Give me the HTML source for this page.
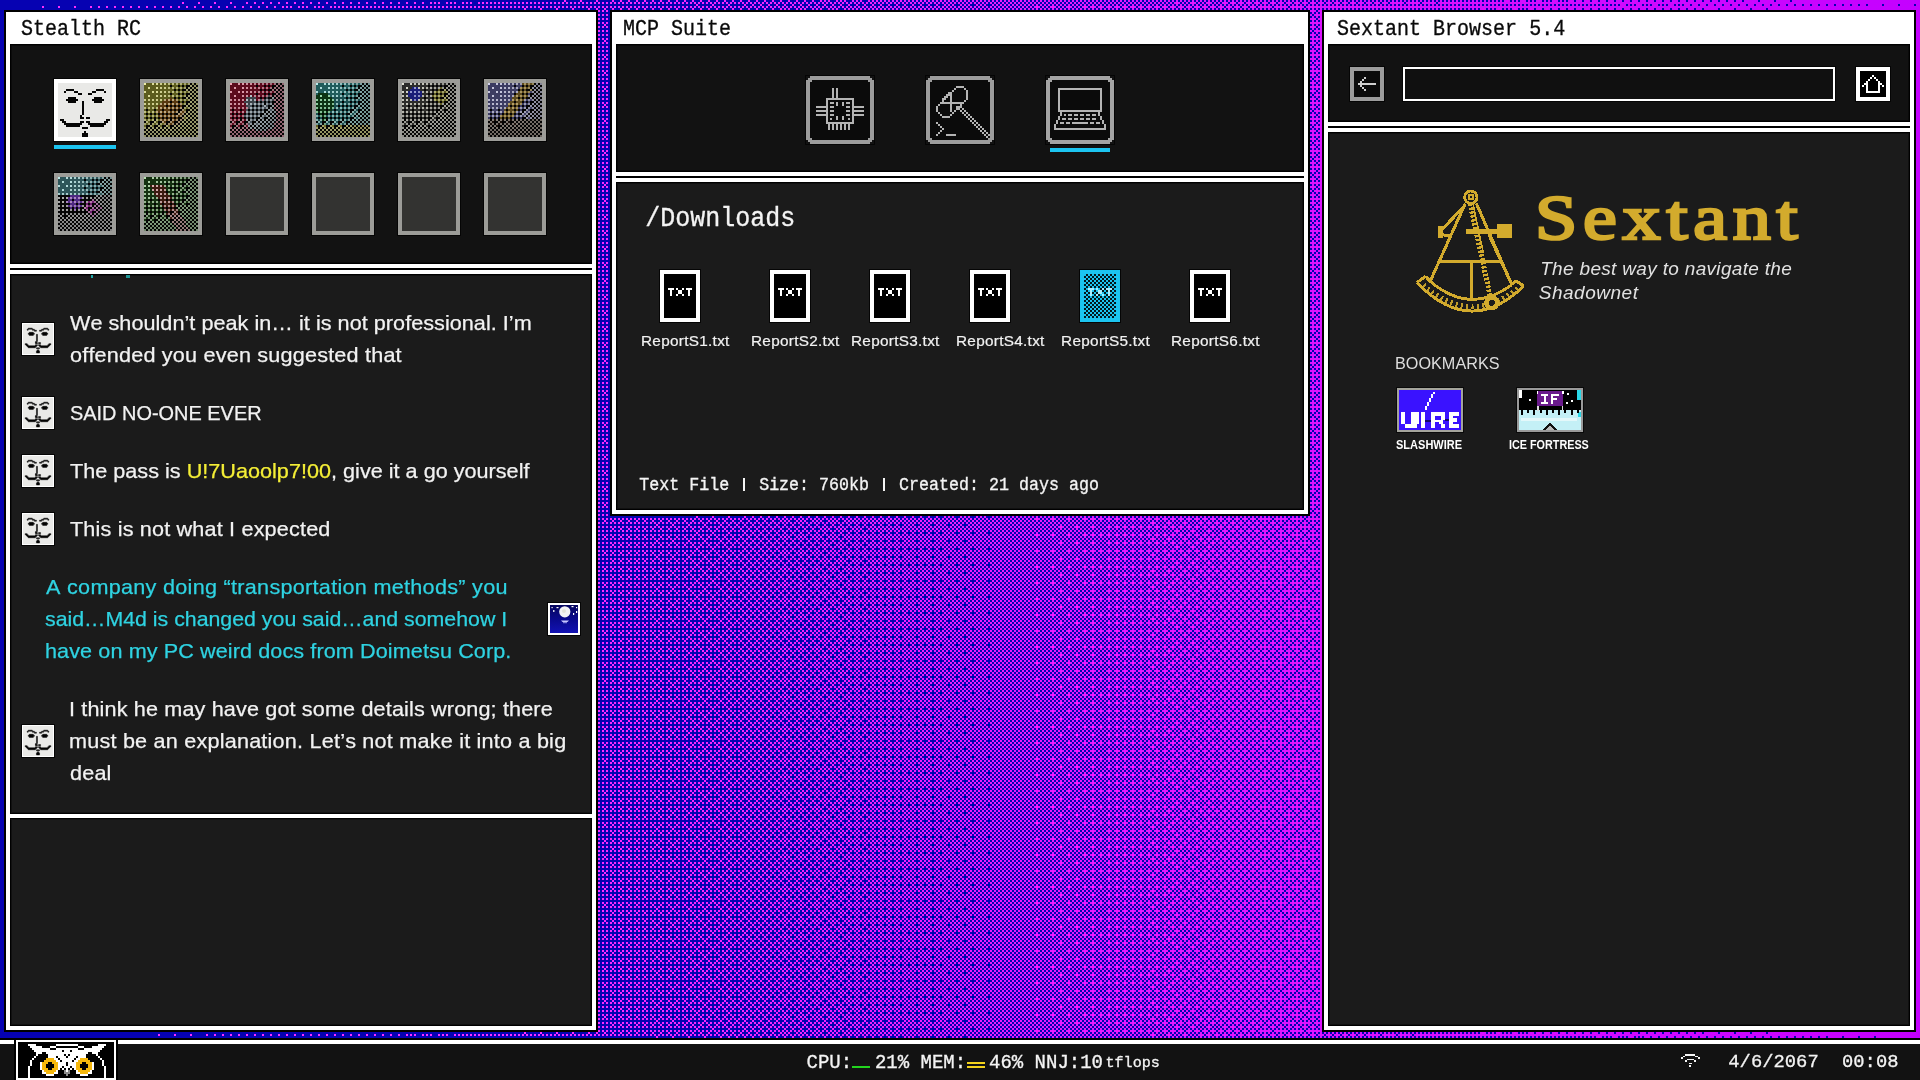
<!DOCTYPE html><html><head><meta charset="utf-8"><title>desktop</title><style>
*{box-sizing:border-box;margin:0;padding:0}
html,body{width:1920px;height:1080px;overflow:hidden;background:#0602b2}
body{position:relative;font-family:"Liberation Sans",sans-serif;color:#f2f2f2}
.bg{position:absolute;left:0;top:0}
.abs{position:absolute}
.win{position:absolute;background:#000}
.win>.wh{position:absolute;left:2px;top:2px;right:2px;bottom:2px;background:#fff}
.pn{position:absolute;background:#1b1b1b;box-shadow:inset 0 0 0 1px #000,inset 0 0 0 2px rgba(0,0,0,.4);overflow:hidden}
.pn.d{background:#121212}
.bl{position:absolute;background:#000;height:2px}
.mono{position:absolute;font-family:"Liberation Mono",monospace;white-space:pre;transform-origin:0 0;font-kerning:none;-webkit-text-stroke:.3px currentColor}
.t{position:absolute;white-space:pre;font-kerning:none}
svg{display:block}
.px{shape-rendering:crispEdges}
</style></head><body><svg class="bg" width="1920" height="1080" viewBox="0 0 1920 1080" shape-rendering="crispEdges"><defs><pattern id="b0" width="16" height="16" patternUnits="userSpaceOnUse"><rect x="10" y="6" width="2" height="2" fill="#ff2cff"/></pattern><pattern id="b1" width="16" height="16" patternUnits="userSpaceOnUse"><rect x="2" y="14" width="2" height="2" fill="#ff2cff"/></pattern><pattern id="b2" width="16" height="16" patternUnits="userSpaceOnUse"><rect x="2" y="6" width="2" height="2" fill="#ff2cff"/></pattern><pattern id="b3" width="16" height="16" patternUnits="userSpaceOnUse"><rect x="10" y="14" width="2" height="2" fill="#ff2cff"/></pattern><pattern id="b4" width="16" height="16" patternUnits="userSpaceOnUse"><rect x="14" y="10" width="2" height="2" fill="#ff2cff"/></pattern><pattern id="b5" width="16" height="16" patternUnits="userSpaceOnUse"><rect x="6" y="2" width="2" height="2" fill="#ff2cff"/></pattern><pattern id="b6" width="16" height="16" patternUnits="userSpaceOnUse"><rect x="6" y="10" width="2" height="2" fill="#ff2cff"/></pattern><pattern id="b7" width="16" height="16" patternUnits="userSpaceOnUse"><rect x="14" y="2" width="2" height="2" fill="#ff2cff"/></pattern><pattern id="b8" width="16" height="16" patternUnits="userSpaceOnUse"><rect x="14" y="6" width="2" height="2" fill="#ff2cff"/></pattern><pattern id="b9" width="16" height="16" patternUnits="userSpaceOnUse"><rect x="6" y="14" width="2" height="2" fill="#ff2cff"/></pattern><pattern id="b10" width="16" height="16" patternUnits="userSpaceOnUse"><rect x="6" y="6" width="2" height="2" fill="#ff2cff"/></pattern><pattern id="b11" width="16" height="16" patternUnits="userSpaceOnUse"><rect x="14" y="14" width="2" height="2" fill="#ff2cff"/></pattern><pattern id="b12" width="16" height="16" patternUnits="userSpaceOnUse"><rect x="10" y="10" width="2" height="2" fill="#ff2cff"/></pattern><pattern id="b13" width="16" height="16" patternUnits="userSpaceOnUse"><rect x="2" y="2" width="2" height="2" fill="#ff2cff"/></pattern><pattern id="b14" width="16" height="16" patternUnits="userSpaceOnUse"><rect x="2" y="10" width="2" height="2" fill="#ff2cff"/></pattern><pattern id="b15" width="16" height="16" patternUnits="userSpaceOnUse"><rect x="10" y="2" width="2" height="2" fill="#ff2cff"/></pattern><pattern id="b16" width="16" height="16" patternUnits="userSpaceOnUse"><rect x="12" y="8" width="2" height="2" fill="#ff2cff"/></pattern><pattern id="b17" width="16" height="16" patternUnits="userSpaceOnUse"><rect x="4" y="0" width="2" height="2" fill="#ff2cff"/></pattern><pattern id="b18" width="16" height="16" patternUnits="userSpaceOnUse"><rect x="4" y="8" width="2" height="2" fill="#ff2cff"/></pattern><pattern id="b19" width="16" height="16" patternUnits="userSpaceOnUse"><rect x="12" y="0" width="2" height="2" fill="#ff2cff"/></pattern><pattern id="b20" width="16" height="16" patternUnits="userSpaceOnUse"><rect x="0" y="12" width="2" height="2" fill="#ff2cff"/></pattern><pattern id="b21" width="16" height="16" patternUnits="userSpaceOnUse"><rect x="8" y="4" width="2" height="2" fill="#ff2cff"/></pattern><pattern id="b22" width="16" height="16" patternUnits="userSpaceOnUse"><rect x="8" y="12" width="2" height="2" fill="#ff2cff"/></pattern><pattern id="b23" width="16" height="16" patternUnits="userSpaceOnUse"><rect x="0" y="4" width="2" height="2" fill="#ff2cff"/></pattern><pattern id="b24" width="16" height="16" patternUnits="userSpaceOnUse"><rect x="0" y="8" width="2" height="2" fill="#ff2cff"/></pattern><pattern id="b25" width="16" height="16" patternUnits="userSpaceOnUse"><rect x="8" y="0" width="2" height="2" fill="#ff2cff"/></pattern><pattern id="b26" width="16" height="16" patternUnits="userSpaceOnUse"><rect x="8" y="8" width="2" height="2" fill="#ff2cff"/></pattern><pattern id="b27" width="16" height="16" patternUnits="userSpaceOnUse"><rect x="0" y="0" width="2" height="2" fill="#ff2cff"/></pattern><pattern id="b28" width="16" height="16" patternUnits="userSpaceOnUse"><rect x="12" y="12" width="2" height="2" fill="#ff2cff"/></pattern><pattern id="b29" width="16" height="16" patternUnits="userSpaceOnUse"><rect x="4" y="4" width="2" height="2" fill="#ff2cff"/></pattern><pattern id="b30" width="16" height="16" patternUnits="userSpaceOnUse"><rect x="4" y="12" width="2" height="2" fill="#ff2cff"/></pattern><pattern id="b31" width="16" height="16" patternUnits="userSpaceOnUse"><rect x="12" y="4" width="2" height="2" fill="#ff2cff"/></pattern><pattern id="b32" width="16" height="16" patternUnits="userSpaceOnUse"><rect x="12" y="6" width="2" height="2" fill="#ff2cff"/></pattern><pattern id="b33" width="16" height="16" patternUnits="userSpaceOnUse"><rect x="4" y="14" width="2" height="2" fill="#ff2cff"/></pattern><pattern id="b34" width="16" height="16" patternUnits="userSpaceOnUse"><rect x="4" y="6" width="2" height="2" fill="#ff2cff"/></pattern><pattern id="b35" width="16" height="16" patternUnits="userSpaceOnUse"><rect x="12" y="14" width="2" height="2" fill="#ff2cff"/></pattern><pattern id="b36" width="16" height="16" patternUnits="userSpaceOnUse"><rect x="0" y="10" width="2" height="2" fill="#ff2cff"/></pattern><pattern id="b37" width="16" height="16" patternUnits="userSpaceOnUse"><rect x="8" y="2" width="2" height="2" fill="#ff2cff"/></pattern><pattern id="b38" width="16" height="16" patternUnits="userSpaceOnUse"><rect x="8" y="10" width="2" height="2" fill="#ff2cff"/></pattern><pattern id="b39" width="16" height="16" patternUnits="userSpaceOnUse"><rect x="0" y="2" width="2" height="2" fill="#ff2cff"/></pattern><pattern id="b40" width="16" height="16" patternUnits="userSpaceOnUse"><rect x="0" y="6" width="2" height="2" fill="#ff2cff"/></pattern><pattern id="b41" width="16" height="16" patternUnits="userSpaceOnUse"><rect x="8" y="14" width="2" height="2" fill="#ff2cff"/></pattern><pattern id="b42" width="16" height="16" patternUnits="userSpaceOnUse"><rect x="8" y="6" width="2" height="2" fill="#ff2cff"/></pattern><pattern id="b43" width="16" height="16" patternUnits="userSpaceOnUse"><rect x="0" y="14" width="2" height="2" fill="#ff2cff"/></pattern><pattern id="b44" width="16" height="16" patternUnits="userSpaceOnUse"><rect x="12" y="10" width="2" height="2" fill="#ff2cff"/></pattern><pattern id="b45" width="16" height="16" patternUnits="userSpaceOnUse"><rect x="4" y="2" width="2" height="2" fill="#ff2cff"/></pattern><pattern id="b46" width="16" height="16" patternUnits="userSpaceOnUse"><rect x="4" y="10" width="2" height="2" fill="#ff2cff"/></pattern><pattern id="b47" width="16" height="16" patternUnits="userSpaceOnUse"><rect x="12" y="2" width="2" height="2" fill="#ff2cff"/></pattern><pattern id="b48" width="16" height="16" patternUnits="userSpaceOnUse"><rect x="10" y="8" width="2" height="2" fill="#ff2cff"/></pattern><pattern id="b49" width="16" height="16" patternUnits="userSpaceOnUse"><rect x="2" y="0" width="2" height="2" fill="#ff2cff"/></pattern><pattern id="b50" width="16" height="16" patternUnits="userSpaceOnUse"><rect x="2" y="8" width="2" height="2" fill="#ff2cff"/></pattern><pattern id="b51" width="16" height="16" patternUnits="userSpaceOnUse"><rect x="10" y="0" width="2" height="2" fill="#ff2cff"/></pattern><pattern id="b52" width="16" height="16" patternUnits="userSpaceOnUse"><rect x="14" y="12" width="2" height="2" fill="#ff2cff"/></pattern><pattern id="b53" width="16" height="16" patternUnits="userSpaceOnUse"><rect x="6" y="4" width="2" height="2" fill="#ff2cff"/></pattern><pattern id="b54" width="16" height="16" patternUnits="userSpaceOnUse"><rect x="6" y="12" width="2" height="2" fill="#ff2cff"/></pattern><pattern id="b55" width="16" height="16" patternUnits="userSpaceOnUse"><rect x="14" y="4" width="2" height="2" fill="#ff2cff"/></pattern><pattern id="b56" width="16" height="16" patternUnits="userSpaceOnUse"><rect x="14" y="8" width="2" height="2" fill="#ff2cff"/></pattern><pattern id="b57" width="16" height="16" patternUnits="userSpaceOnUse"><rect x="6" y="0" width="2" height="2" fill="#ff2cff"/></pattern><pattern id="b58" width="16" height="16" patternUnits="userSpaceOnUse"><rect x="6" y="8" width="2" height="2" fill="#ff2cff"/></pattern><pattern id="b59" width="16" height="16" patternUnits="userSpaceOnUse"><rect x="14" y="0" width="2" height="2" fill="#ff2cff"/></pattern><pattern id="b60" width="16" height="16" patternUnits="userSpaceOnUse"><rect x="10" y="12" width="2" height="2" fill="#ff2cff"/></pattern><pattern id="b61" width="16" height="16" patternUnits="userSpaceOnUse"><rect x="2" y="4" width="2" height="2" fill="#ff2cff"/></pattern><pattern id="b62" width="16" height="16" patternUnits="userSpaceOnUse"><rect x="2" y="12" width="2" height="2" fill="#ff2cff"/></pattern><pattern id="b63" width="16" height="16" patternUnits="userSpaceOnUse"><rect x="10" y="4" width="2" height="2" fill="#ff2cff"/></pattern></defs><rect width="1920" height="1080" fill="#0602b2"/><rect x="30" y="0" width="1890" height="1044" fill="url(#b0)"/><rect x="60" y="0" width="1860" height="1044" fill="url(#b1)"/><rect x="90" y="0" width="1830" height="1044" fill="url(#b2)"/><rect x="120" y="0" width="1800" height="1044" fill="url(#b3)"/><rect x="150" y="0" width="1770" height="1044" fill="url(#b4)"/><rect x="180" y="0" width="1740" height="1044" fill="url(#b5)"/><rect x="212" y="0" width="1708" height="1044" fill="url(#b6)"/><rect x="242" y="0" width="1678" height="1044" fill="url(#b7)"/><rect x="272" y="0" width="1648" height="1044" fill="url(#b8)"/><rect x="304" y="0" width="1616" height="1044" fill="url(#b9)"/><rect x="334" y="0" width="1586" height="1044" fill="url(#b10)"/><rect x="366" y="0" width="1554" height="1044" fill="url(#b11)"/><rect x="396" y="0" width="1524" height="1044" fill="url(#b12)"/><rect x="428" y="0" width="1492" height="1044" fill="url(#b13)"/><rect x="460" y="0" width="1460" height="1044" fill="url(#b14)"/><rect x="490" y="0" width="1430" height="1044" fill="url(#b15)"/><rect x="522" y="0" width="1398" height="1044" fill="url(#b16)"/><rect x="554" y="0" width="1366" height="1044" fill="url(#b17)"/><rect x="586" y="0" width="1334" height="1044" fill="url(#b18)"/><rect x="618" y="0" width="1302" height="1044" fill="url(#b19)"/><rect x="652" y="0" width="1268" height="1044" fill="url(#b20)"/><rect x="684" y="0" width="1236" height="1044" fill="url(#b21)"/><rect x="716" y="0" width="1204" height="1044" fill="url(#b22)"/><rect x="748" y="0" width="1172" height="1044" fill="url(#b23)"/><rect x="780" y="0" width="1140" height="1044" fill="url(#b24)"/><rect x="812" y="0" width="1108" height="1044" fill="url(#b25)"/><rect x="842" y="0" width="1078" height="1044" fill="url(#b26)"/><rect x="874" y="0" width="1046" height="1044" fill="url(#b27)"/><rect x="904" y="0" width="1016" height="1044" fill="url(#b28)"/><rect x="936" y="0" width="984" height="1044" fill="url(#b29)"/><rect x="966" y="0" width="954" height="1044" fill="url(#b30)"/><rect x="996" y="0" width="924" height="1044" fill="url(#b31)"/><rect x="1024" y="0" width="896" height="1044" fill="url(#b32)"/><rect x="1054" y="0" width="866" height="1044" fill="url(#b33)"/><rect x="1082" y="0" width="838" height="1044" fill="url(#b34)"/><rect x="1112" y="0" width="808" height="1044" fill="url(#b35)"/><rect x="1140" y="0" width="780" height="1044" fill="url(#b36)"/><rect x="1168" y="0" width="752" height="1044" fill="url(#b37)"/><rect x="1196" y="0" width="724" height="1044" fill="url(#b38)"/><rect x="1224" y="0" width="696" height="1044" fill="url(#b39)"/><rect x="1252" y="0" width="668" height="1044" fill="url(#b40)"/><rect x="1278" y="0" width="642" height="1044" fill="url(#b41)"/><rect x="1306" y="0" width="614" height="1044" fill="url(#b42)"/><rect x="1334" y="0" width="586" height="1044" fill="url(#b43)"/><rect x="1362" y="0" width="558" height="1044" fill="url(#b44)"/><rect x="1390" y="0" width="530" height="1044" fill="url(#b45)"/><rect x="1420" y="0" width="500" height="1044" fill="url(#b46)"/><rect x="1448" y="0" width="472" height="1044" fill="url(#b47)"/><rect x="1476" y="0" width="444" height="1044" fill="url(#b48)"/><rect x="1506" y="0" width="414" height="1044" fill="url(#b49)"/><rect x="1534" y="0" width="386" height="1044" fill="url(#b50)"/><rect x="1564" y="0" width="356" height="1044" fill="url(#b51)"/><rect x="1592" y="0" width="328" height="1044" fill="url(#b52)"/><rect x="1622" y="0" width="298" height="1044" fill="url(#b53)"/><rect x="1652" y="0" width="268" height="1044" fill="url(#b54)"/><rect x="1680" y="0" width="240" height="1044" fill="url(#b55)"/><rect x="1710" y="0" width="210" height="1044" fill="url(#b56)"/><rect x="1740" y="0" width="180" height="1044" fill="url(#b57)"/><rect x="1770" y="0" width="150" height="1044" fill="url(#b58)"/><rect x="1800" y="0" width="120" height="1044" fill="url(#b59)"/><rect x="1830" y="0" width="90" height="1044" fill="url(#b60)"/><rect x="1860" y="0" width="60" height="1044" fill="url(#b61)"/><rect x="1890" y="0" width="30" height="1044" fill="url(#b62)"/><defs><linearGradient id="vg" x1="0" y1="0" x2="1" y2="0"><stop offset=".25" stop-color="#ffffff"/><stop offset="1" stop-color="#c400ff"/></linearGradient></defs><rect width="1920" height="1044" fill="url(#vg)" style="mix-blend-mode:multiply"/></svg><div id="c" style="position:absolute;left:0;top:0;width:1920px;height:1080px;will-change:transform"><div class="win" style="left:4px;top:10px;width:594px;height:1022px"><div class="wh"></div></div><div class="pn d" style="left:10px;top:44px;width:582px;height:220px"></div><div class="bl" style="left:10px;top:268px;width:582px"></div><div class="pn" style="left:10px;top:274px;width:582px;height:540px"></div><div class="pn" style="left:10px;top:818px;width:582px;height:208px"></div><div class="mono" style="left:21.10px;top:18.36px;font-size:20.000px;line-height:20.000px;color:#0a0a0a;transform:scaleY(1.1381);">Stealth RC</div><div class="win" style="left:610px;top:10px;width:700px;height:506px"><div class="wh"></div></div><div class="pn d" style="left:616px;top:44px;width:688px;height:128px"></div><div class="bl" style="left:616px;top:176px;width:688px"></div><div class="pn" style="left:616px;top:182px;width:688px;height:328px"></div><div class="mono" style="left:623.10px;top:18.36px;font-size:20.000px;line-height:20.000px;color:#0a0a0a;transform:scaleY(1.1381);">MCP Suite</div><div class="win" style="left:1322px;top:10px;width:594px;height:1022px"><div class="wh"></div></div><div class="pn d" style="left:1328px;top:44px;width:582px;height:78px"></div><div class="bl" style="left:1328px;top:126px;width:582px"></div><div class="pn" style="left:1328px;top:132px;width:582px;height:894px"></div><div class="mono" style="left:1337.10px;top:18.36px;font-size:20.000px;line-height:20.000px;color:#0a0a0a;transform:scaleY(1.1381);">Sextant Browser 5.4</div><div class="abs" style="left:0;top:1038px;width:1920px;height:42px;background:#000"></div><div class="abs" style="left:0;top:1040px;width:1920px;height:4px;background:#fff"></div><div class="abs" style="left:0;top:1044px;width:1920px;height:36px;background:#121212"></div><svg class="px" style="position:absolute;left:54px;top:79px;outline:1px solid #050505" width="62" height="62" viewBox="0 0 31 31"><rect width="31" height="31" fill="#fff"/><rect x="2" y="2" width="27" height="27" fill="#e9e9e7"/><path d="M6 5h4v1h-4zM5 6h1v1h-1zM10 6h2v1h-2zM12 7h2v1h-2zM21 5h4v1h-4zM25 6h1v1h-1zM19 6h2v1h-2zM17 7h2v1h-2zM7 9h4v1h-4zM6 10h6v1h-6zM7 11h4v1h-4zM20 9h4v1h-4zM19 10h6v1h-6zM20 11h4v1h-4zM14 11h1v7h-1zM13 18h1v1h-1zM13 19h2v1h-2zM16 19h2v1h-2zM3 20h2v1h-2zM4 21h2v1h-2zM5 22h9v1h-9zM6 23h7v1h-7zM13 21h2v1h-2zM26 20h2v1h-2zM25 21h2v1h-2zM17 22h9v1h-9zM18 23h7v1h-7zM16 21h2v1h-2zM14 24h3v1h-3zM15 26h1v1h-1zM14 27h3v2h-3z" fill="#050505"/></svg><div class="abs" style="left:54px;top:145px;width:62px;height:4px;background:#1cc4f0"></div><svg class="px" style="position:absolute;left:140px;top:79px;outline:1px solid #050505" width="62" height="62" viewBox="-2 -2 31 31"><rect x="-2" y="-2" width="31" height="31" fill="#9c9c98"/><path fill="#ebeba4" d="M0 0h1v1h-1z"/><path fill="#5c5c1e" d="M1 0h3v1h-3zM5 0h1v1h-1zM7 0h1v1h-1zM9 0h1v1h-1zM11 0h1v1h-1zM13 0h1v1h-1zM15 0h1v1h-1zM17 0h1v1h-1zM19 0h1v1h-1zM21 0h1v1h-1zM0 1h13v1h-13zM14 1h3v1h-3zM18 1h1v1h-1zM20 1h1v1h-1zM0 2h2v1h-2zM3 2h3v1h-3zM7 2h1v1h-1zM9 2h1v1h-1zM11 2h1v1h-1zM13 2h1v1h-1zM15 2h1v1h-1zM17 2h1v1h-1zM19 2h1v1h-1zM0 3h15v1h-15zM16 3h1v1h-1zM18 3h1v1h-1zM1 4h3v1h-3zM5 4h1v1h-1zM7 4h1v1h-1zM9 4h1v1h-1zM11 4h1v1h-1zM13 4h1v1h-1zM15 4h1v1h-1zM17 4h1v1h-1zM19 4h1v1h-1zM21 4h1v1h-1zM0 5h13v1h-13zM14 5h3v1h-3zM18 5h1v1h-1zM20 5h1v1h-1zM0 6h2v1h-2zM3 6h3v1h-3zM7 6h1v1h-1zM9 6h1v1h-1zM11 6h1v1h-1zM13 6h1v1h-1zM15 6h1v1h-1zM17 6h1v1h-1zM19 6h1v1h-1zM0 7h13v1h-13zM14 7h1v1h-1zM16 7h1v1h-1zM18 7h1v1h-1zM1 8h1v1h-1zM3 8h1v1h-1zM5 8h1v1h-1zM7 8h1v1h-1zM9 8h1v1h-1zM17 8h1v1h-1zM19 8h1v1h-1zM21 8h1v1h-1zM0 9h9v1h-9zM18 9h1v1h-1zM20 9h1v1h-1zM1 10h1v1h-1zM3 10h1v1h-1zM5 10h1v1h-1zM7 10h1v1h-1zM19 10h1v1h-1zM0 11h7v1h-7zM1 12h1v1h-1zM3 12h1v1h-1zM5 12h1v1h-1zM21 12h1v1h-1zM0 13h1v1h-1zM2 13h3v1h-3zM6 13h1v1h-1zM20 13h1v1h-1zM1 14h1v1h-1zM3 14h1v1h-1zM5 14h1v1h-1zM0 15h1v1h-1zM2 15h1v1h-1zM4 15h1v1h-1zM6 15h1v1h-1zM1 16h1v1h-1zM3 16h1v1h-1zM5 16h1v1h-1zM0 17h1v1h-1zM2 17h1v1h-1zM4 17h1v1h-1zM6 17h1v1h-1zM20 17h1v1h-1zM1 18h1v1h-1zM3 18h1v1h-1zM7 18h1v1h-1zM2 19h1v1h-1zM6 19h1v1h-1zM1 20h1v1h-1zM5 20h1v1h-1zM9 20h1v1h-1zM0 21h1v1h-1zM4 21h1v1h-1zM8 21h1v1h-1zM12 21h1v1h-1z"/><path fill="#dcdc9a" d="M4 0h1v1h-1zM6 0h1v1h-1zM2 2h1v1h-1zM6 2h1v1h-1zM0 4h1v1h-1zM4 4h1v1h-1zM6 4h1v1h-1zM2 6h1v1h-1z"/><path fill="#cece90" d="M8 0h1v1h-1zM10 0h1v1h-1zM8 2h1v1h-1zM10 2h1v1h-1zM8 4h1v1h-1zM10 4h1v1h-1zM6 6h1v1h-1zM8 6h1v1h-1zM10 6h1v1h-1zM0 8h1v1h-1zM2 8h1v1h-1zM4 8h1v1h-1zM6 8h1v1h-1zM8 8h1v1h-1zM0 10h1v1h-1zM2 10h1v1h-1zM4 10h1v1h-1zM6 10h1v1h-1z"/><path fill="#bfbf86" d="M12 0h1v1h-1zM14 0h1v1h-1zM12 2h1v1h-1zM14 2h1v1h-1zM12 4h1v1h-1zM14 4h1v1h-1zM12 6h1v1h-1zM14 6h1v1h-1zM0 12h1v1h-1zM2 12h1v1h-1zM4 12h1v1h-1zM6 12h1v1h-1zM0 14h1v1h-1zM2 14h1v1h-1zM4 14h1v1h-1z"/><path fill="#b1b17b" d="M16 0h1v1h-1zM18 0h1v1h-1zM16 2h1v1h-1zM18 2h1v1h-1zM16 4h1v1h-1zM18 4h1v1h-1zM16 6h1v1h-1zM18 6h1v1h-1zM18 8h1v1h-1zM0 16h1v1h-1zM2 16h1v1h-1zM4 16h1v1h-1zM6 16h1v1h-1zM0 18h1v1h-1zM2 18h1v1h-1zM4 18h1v1h-1zM6 18h1v1h-1zM1 19h1v1h-1zM5 19h1v1h-1z"/><path fill="#a2a271" d="M20 0h1v1h-1zM22 0h1v1h-1zM23 1h1v1h-1zM20 2h1v1h-1zM22 2h1v1h-1zM21 3h1v1h-1zM23 3h1v1h-1zM20 4h1v1h-1zM22 4h1v1h-1zM23 5h1v1h-1zM20 6h1v1h-1zM22 6h1v1h-1zM21 7h1v1h-1zM23 7h1v1h-1zM20 8h1v1h-1zM22 8h1v1h-1zM23 9h1v1h-1zM20 10h1v1h-1zM22 10h1v1h-1zM21 11h1v1h-1zM23 11h1v1h-1zM20 12h1v1h-1zM22 12h1v1h-1zM23 13h1v1h-1zM22 14h1v1h-1zM21 15h1v1h-1zM20 16h1v1h-1zM22 16h1v1h-1zM21 17h1v1h-1zM20 18h1v1h-1zM19 19h1v1h-1zM0 20h1v1h-1zM2 20h1v1h-1zM4 20h1v1h-1zM6 20h1v1h-1zM8 20h1v1h-1zM18 20h1v1h-1zM20 20h1v1h-1zM3 21h1v1h-1zM7 21h1v1h-1zM11 21h1v1h-1zM15 21h1v1h-1zM17 21h1v1h-1zM0 22h1v1h-1zM2 22h1v1h-1zM4 22h1v1h-1zM6 22h1v1h-1zM8 22h1v1h-1zM10 22h1v1h-1zM12 22h1v1h-1zM14 22h1v1h-1zM16 22h1v1h-1zM1 23h1v1h-1zM3 23h1v1h-1zM5 23h1v1h-1zM7 23h1v1h-1zM9 23h1v1h-1zM11 23h1v1h-1zM13 23h1v1h-1z"/><path fill="#040404" d="M23 0h1v1h-1zM25 0h1v1h-1zM13 1h1v1h-1zM17 1h1v1h-1zM19 1h1v1h-1zM21 1h2v1h-2zM24 1h1v1h-1zM26 1h1v1h-1zM21 2h1v1h-1zM23 2h1v1h-1zM25 2h1v1h-1zM15 3h1v1h-1zM17 3h1v1h-1zM19 3h2v1h-2zM22 3h1v1h-1zM24 3h1v1h-1zM26 3h1v1h-1zM23 4h1v1h-1zM25 4h1v1h-1zM13 5h1v1h-1zM17 5h1v1h-1zM19 5h1v1h-1zM21 5h2v1h-2zM24 5h1v1h-1zM26 5h1v1h-1zM21 6h1v1h-1zM23 6h1v1h-1zM25 6h1v1h-1zM15 7h1v1h-1zM17 7h1v1h-1zM19 7h2v1h-2zM22 7h1v1h-1zM24 7h1v1h-1zM26 7h1v1h-1zM23 8h1v1h-1zM25 8h1v1h-1zM13 9h1v1h-1zM17 9h1v1h-1zM19 9h1v1h-1zM21 9h2v1h-2zM24 9h1v1h-1zM26 9h1v1h-1zM21 10h1v1h-1zM23 10h1v1h-1zM25 10h1v1h-1zM11 11h1v1h-1zM13 11h1v1h-1zM15 11h1v1h-1zM17 11h1v1h-1zM19 11h2v1h-2zM22 11h1v1h-1zM24 11h1v1h-1zM26 11h1v1h-1zM19 12h1v1h-1zM23 12h1v1h-1zM25 12h1v1h-1zM1 13h1v1h-1zM5 13h1v1h-1zM9 13h1v1h-1zM13 13h1v1h-1zM15 13h1v1h-1zM17 13h2v1h-2zM21 13h2v1h-2zM24 13h1v1h-1zM26 13h1v1h-1zM17 14h1v1h-1zM21 14h1v1h-1zM23 14h1v1h-1zM25 14h1v1h-1zM1 15h1v1h-1zM3 15h1v1h-1zM5 15h1v1h-1zM7 15h1v1h-1zM9 15h1v1h-1zM11 15h1v1h-1zM13 15h1v1h-1zM15 15h2v1h-2zM20 15h1v1h-1zM22 15h1v1h-1zM24 15h1v1h-1zM26 15h1v1h-1zM19 16h1v1h-1zM21 16h1v1h-1zM23 16h1v1h-1zM25 16h1v1h-1zM1 17h1v1h-1zM3 17h1v1h-1zM5 17h1v1h-1zM7 17h1v1h-1zM9 17h1v1h-1zM11 17h1v1h-1zM13 17h1v1h-1zM15 17h1v1h-1zM17 17h2v1h-2zM22 17h1v1h-1zM24 17h1v1h-1zM26 17h1v1h-1zM5 18h1v1h-1zM13 18h1v1h-1zM17 18h1v1h-1zM19 18h1v1h-1zM21 18h1v1h-1zM23 18h1v1h-1zM25 18h1v1h-1zM0 19h1v1h-1zM3 19h2v1h-2zM7 19h2v1h-2zM11 19h2v1h-2zM15 19h2v1h-2zM18 19h1v1h-1zM20 19h1v1h-1zM22 19h1v1h-1zM24 19h1v1h-1zM26 19h1v1h-1zM3 20h1v1h-1zM7 20h1v1h-1zM11 20h1v1h-1zM15 20h1v1h-1zM17 20h1v1h-1zM19 20h1v1h-1zM21 20h1v1h-1zM23 20h1v1h-1zM25 20h1v1h-1zM1 21h2v1h-2zM5 21h2v1h-2zM9 21h2v1h-2zM13 21h2v1h-2zM16 21h1v1h-1zM18 21h1v1h-1zM20 21h1v1h-1zM22 21h1v1h-1zM24 21h1v1h-1zM26 21h1v1h-1zM1 22h1v1h-1zM3 22h1v1h-1zM5 22h1v1h-1zM7 22h1v1h-1zM9 22h1v1h-1zM11 22h1v1h-1zM13 22h1v1h-1zM15 22h1v1h-1zM17 22h1v1h-1zM19 22h1v1h-1zM21 22h1v1h-1zM23 22h1v1h-1zM25 22h1v1h-1zM0 23h1v1h-1zM2 23h1v1h-1zM4 23h1v1h-1zM6 23h1v1h-1zM8 23h1v1h-1zM10 23h1v1h-1zM12 23h1v1h-1zM14 23h1v1h-1zM16 23h1v1h-1zM18 23h1v1h-1zM20 23h1v1h-1zM22 23h1v1h-1zM24 23h1v1h-1zM26 23h1v1h-1zM1 24h1v1h-1zM3 24h1v1h-1zM5 24h1v1h-1zM7 24h1v1h-1zM9 24h1v1h-1zM11 24h1v1h-1zM13 24h1v1h-1zM15 24h1v1h-1zM17 24h1v1h-1zM19 24h1v1h-1zM21 24h1v1h-1zM23 24h1v1h-1zM25 24h1v1h-1zM0 25h1v1h-1zM2 25h1v1h-1zM4 25h1v1h-1zM6 25h1v1h-1zM8 25h1v1h-1zM10 25h1v1h-1zM12 25h1v1h-1zM14 25h1v1h-1zM16 25h1v1h-1zM18 25h1v1h-1zM20 25h1v1h-1zM22 25h1v1h-1zM24 25h1v1h-1zM26 25h1v1h-1zM1 26h1v1h-1zM3 26h1v1h-1zM5 26h1v1h-1zM7 26h1v1h-1zM9 26h1v1h-1zM11 26h1v1h-1zM13 26h1v1h-1zM15 26h1v1h-1zM17 26h1v1h-1zM19 26h1v1h-1zM21 26h1v1h-1zM23 26h1v1h-1zM25 26h1v1h-1z"/><path fill="#949467" d="M24 0h1v1h-1zM26 0h1v1h-1zM25 1h1v1h-1zM24 2h1v1h-1zM26 2h1v1h-1zM25 3h1v1h-1zM24 4h1v1h-1zM26 4h1v1h-1zM25 5h1v1h-1zM24 6h1v1h-1zM26 6h1v1h-1zM25 7h1v1h-1zM24 8h1v1h-1zM26 8h1v1h-1zM25 9h1v1h-1zM24 10h1v1h-1zM26 10h1v1h-1zM25 11h1v1h-1zM24 12h1v1h-1zM26 12h1v1h-1zM25 13h1v1h-1zM24 14h1v1h-1zM26 14h1v1h-1zM23 15h1v1h-1zM25 15h1v1h-1zM24 16h1v1h-1zM26 16h1v1h-1zM23 17h1v1h-1zM25 17h1v1h-1zM22 18h1v1h-1zM24 18h1v1h-1zM26 18h1v1h-1zM21 19h1v1h-1zM23 19h1v1h-1zM25 19h1v1h-1zM22 20h1v1h-1zM24 20h1v1h-1zM26 20h1v1h-1zM19 21h1v1h-1zM21 21h1v1h-1zM23 21h1v1h-1zM25 21h1v1h-1zM18 22h1v1h-1zM20 22h1v1h-1zM22 22h1v1h-1zM24 22h1v1h-1zM26 22h1v1h-1zM15 23h1v1h-1zM17 23h1v1h-1zM19 23h1v1h-1zM21 23h1v1h-1zM23 23h1v1h-1zM25 23h1v1h-1zM0 24h1v1h-1zM2 24h1v1h-1zM4 24h1v1h-1zM6 24h1v1h-1zM8 24h1v1h-1zM10 24h1v1h-1zM12 24h1v1h-1zM14 24h1v1h-1zM16 24h1v1h-1zM18 24h1v1h-1zM20 24h1v1h-1zM22 24h1v1h-1zM24 24h1v1h-1zM26 24h1v1h-1zM1 25h1v1h-1zM3 25h1v1h-1zM5 25h1v1h-1zM7 25h1v1h-1zM9 25h1v1h-1zM11 25h1v1h-1zM13 25h1v1h-1zM15 25h1v1h-1zM17 25h1v1h-1zM19 25h1v1h-1zM21 25h1v1h-1zM23 25h1v1h-1zM25 25h1v1h-1zM0 26h1v1h-1zM2 26h1v1h-1zM4 26h1v1h-1zM6 26h1v1h-1zM8 26h1v1h-1zM10 26h1v1h-1zM12 26h1v1h-1zM14 26h1v1h-1zM16 26h1v1h-1zM18 26h1v1h-1zM20 26h1v1h-1zM22 26h1v1h-1zM24 26h1v1h-1zM26 26h1v1h-1z"/><path fill="#583810" d="M13 7h1v1h-1zM11 8h1v1h-1zM13 8h1v1h-1zM15 8h1v1h-1zM9 9h4v1h-4zM14 9h3v1h-3zM9 10h1v1h-1zM11 10h1v1h-1zM13 10h1v1h-1zM15 10h1v1h-1zM17 10h1v1h-1zM7 11h4v1h-4zM12 11h1v1h-1zM14 11h1v1h-1zM16 11h1v1h-1zM18 11h1v1h-1zM7 12h1v1h-1zM9 12h1v1h-1zM11 12h1v1h-1zM13 12h1v1h-1zM15 12h1v1h-1zM17 12h1v1h-1zM7 13h2v1h-2zM10 13h3v1h-3zM14 13h1v1h-1zM16 13h1v1h-1zM7 14h1v1h-1zM9 14h1v1h-1zM11 14h1v1h-1zM13 14h1v1h-1zM15 14h1v1h-1zM19 14h1v1h-1zM8 15h1v1h-1zM10 15h1v1h-1zM12 15h1v1h-1zM14 15h1v1h-1zM18 15h1v1h-1zM7 16h1v1h-1zM9 16h1v1h-1zM11 16h1v1h-1zM13 16h1v1h-1zM15 16h1v1h-1zM17 16h1v1h-1zM8 17h1v1h-1zM10 17h1v1h-1zM12 17h1v1h-1zM14 17h1v1h-1zM16 17h1v1h-1zM9 18h1v1h-1zM11 18h1v1h-1zM15 18h1v1h-1zM10 19h1v1h-1zM14 19h1v1h-1zM13 20h1v1h-1z"/><path fill="#bfaa84" d="M10 8h1v1h-1zM12 8h1v1h-1zM14 8h1v1h-1zM8 10h1v1h-1zM10 10h1v1h-1zM12 10h1v1h-1zM14 10h1v1h-1zM8 12h1v1h-1zM10 12h1v1h-1zM12 12h1v1h-1zM6 14h1v1h-1zM8 14h1v1h-1zM10 14h1v1h-1z"/><path fill="#b19d7a" d="M16 8h1v1h-1zM16 10h1v1h-1zM18 10h1v1h-1zM14 12h1v1h-1zM16 12h1v1h-1zM18 12h1v1h-1zM12 14h1v1h-1zM14 14h1v1h-1zM16 14h1v1h-1zM18 14h1v1h-1zM17 15h1v1h-1zM8 16h1v1h-1zM10 16h1v1h-1zM12 16h1v1h-1zM14 16h1v1h-1zM16 16h1v1h-1zM8 18h1v1h-1zM10 18h1v1h-1zM12 18h1v1h-1zM14 18h1v1h-1zM9 19h1v1h-1z"/><path fill="#a29070" d="M19 13h1v1h-1zM20 14h1v1h-1zM19 15h1v1h-1zM18 16h1v1h-1zM19 17h1v1h-1zM16 18h1v1h-1zM18 18h1v1h-1zM13 19h1v1h-1zM17 19h1v1h-1zM10 20h1v1h-1zM12 20h1v1h-1zM14 20h1v1h-1zM16 20h1v1h-1z"/></svg><svg class="px" style="position:absolute;left:226px;top:79px;outline:1px solid #050505" width="62" height="62" viewBox="-2 -2 31 31"><rect x="-2" y="-2" width="31" height="31" fill="#9c9c98"/><path fill="#eba4b4" d="M0 0h1v1h-1z"/><path fill="#5c0a1c" d="M1 0h3v1h-3zM5 0h1v1h-1zM7 0h1v1h-1zM9 0h1v1h-1zM11 0h1v1h-1zM13 0h1v1h-1zM15 0h1v1h-1zM17 0h1v1h-1zM19 0h1v1h-1zM21 0h1v1h-1zM0 1h13v1h-13zM14 1h3v1h-3zM18 1h1v1h-1zM20 1h1v1h-1zM0 2h2v1h-2zM3 2h3v1h-3zM7 2h1v1h-1zM9 2h1v1h-1zM11 2h1v1h-1zM13 2h1v1h-1zM15 2h1v1h-1zM17 2h1v1h-1zM19 2h1v1h-1zM0 3h15v1h-15zM16 3h1v1h-1zM18 3h1v1h-1zM1 4h3v1h-3zM5 4h1v1h-1zM7 4h1v1h-1zM9 4h1v1h-1zM11 4h1v1h-1zM13 4h1v1h-1zM15 4h1v1h-1zM17 4h1v1h-1zM19 4h1v1h-1zM21 4h1v1h-1zM0 5h13v1h-13zM14 5h3v1h-3zM18 5h1v1h-1zM20 5h1v1h-1zM0 6h2v1h-2zM3 6h3v1h-3zM7 6h1v1h-1zM9 6h1v1h-1zM11 6h1v1h-1zM13 6h1v1h-1zM15 6h1v1h-1zM17 6h1v1h-1zM0 7h8v1h-8zM13 7h2v1h-2zM16 7h1v1h-1zM1 8h1v1h-1zM3 8h1v1h-1zM5 8h1v1h-1zM7 8h1v1h-1zM13 8h1v1h-1zM0 9h7v1h-7zM1 10h1v1h-1zM3 10h1v1h-1zM5 10h1v1h-1zM7 10h1v1h-1zM0 11h8v1h-8zM1 12h1v1h-1zM3 12h1v1h-1zM5 12h1v1h-1zM7 12h1v1h-1zM0 13h1v1h-1zM2 13h3v1h-3zM6 13h2v1h-2zM1 14h1v1h-1zM3 14h1v1h-1zM5 14h1v1h-1zM7 14h1v1h-1zM0 15h1v1h-1zM2 15h1v1h-1zM4 15h1v1h-1zM6 15h1v1h-1zM1 16h1v1h-1zM3 16h1v1h-1zM5 16h1v1h-1zM0 17h1v1h-1zM2 17h1v1h-1zM4 17h1v1h-1zM6 17h1v1h-1zM1 18h1v1h-1zM3 18h1v1h-1zM7 18h1v1h-1zM2 19h1v1h-1zM6 19h1v1h-1zM1 20h1v1h-1zM5 20h1v1h-1zM0 21h1v1h-1zM4 21h1v1h-1zM8 21h1v1h-1z"/><path fill="#dc9aa9" d="M4 0h1v1h-1zM6 0h1v1h-1zM2 2h1v1h-1zM6 2h1v1h-1zM0 4h1v1h-1zM4 4h1v1h-1zM6 4h1v1h-1zM2 6h1v1h-1z"/><path fill="#ce909e" d="M8 0h1v1h-1zM10 0h1v1h-1zM8 2h1v1h-1zM10 2h1v1h-1zM8 4h1v1h-1zM10 4h1v1h-1zM6 6h1v1h-1zM8 6h1v1h-1zM0 8h1v1h-1zM2 8h1v1h-1zM4 8h1v1h-1zM6 8h1v1h-1zM0 10h1v1h-1zM2 10h1v1h-1zM4 10h1v1h-1zM6 10h1v1h-1z"/><path fill="#bf8693" d="M12 0h1v1h-1zM14 0h1v1h-1zM12 2h1v1h-1zM14 2h1v1h-1zM12 4h1v1h-1zM14 4h1v1h-1zM12 6h1v1h-1zM14 6h1v1h-1zM14 8h1v1h-1zM0 12h1v1h-1zM2 12h1v1h-1zM4 12h1v1h-1zM6 12h1v1h-1zM8 12h1v1h-1zM0 14h1v1h-1zM2 14h1v1h-1zM4 14h1v1h-1zM6 14h1v1h-1z"/><path fill="#b17b88" d="M16 0h1v1h-1zM18 0h1v1h-1zM16 2h1v1h-1zM18 2h1v1h-1zM16 4h1v1h-1zM18 4h1v1h-1zM16 6h1v1h-1zM18 6h1v1h-1zM16 8h1v1h-1zM0 16h1v1h-1zM2 16h1v1h-1zM4 16h1v1h-1zM6 16h1v1h-1zM0 18h1v1h-1zM2 18h1v1h-1zM4 18h1v1h-1zM6 18h1v1h-1zM1 19h1v1h-1zM5 19h1v1h-1z"/><path fill="#a2717d" d="M20 0h1v1h-1zM22 0h1v1h-1zM23 1h1v1h-1zM20 2h1v1h-1zM22 2h1v1h-1zM21 3h1v1h-1zM23 3h1v1h-1zM20 4h1v1h-1zM22 4h1v1h-1zM23 5h1v1h-1zM20 6h1v1h-1zM22 6h1v1h-1zM23 7h1v1h-1zM22 8h1v1h-1zM23 9h1v1h-1zM22 10h1v1h-1zM23 11h1v1h-1zM22 12h1v1h-1zM23 13h1v1h-1zM0 20h1v1h-1zM2 20h1v1h-1zM4 20h1v1h-1zM6 20h1v1h-1zM8 20h1v1h-1zM3 21h1v1h-1zM7 21h1v1h-1zM0 22h1v1h-1zM2 22h1v1h-1zM4 22h1v1h-1zM6 22h1v1h-1zM8 22h1v1h-1zM1 23h1v1h-1zM3 23h1v1h-1zM5 23h1v1h-1zM7 23h1v1h-1zM9 23h1v1h-1zM11 23h1v1h-1z"/><path fill="#040404" d="M23 0h1v1h-1zM25 0h1v1h-1zM13 1h1v1h-1zM17 1h1v1h-1zM19 1h1v1h-1zM21 1h2v1h-2zM24 1h1v1h-1zM26 1h1v1h-1zM21 2h1v1h-1zM23 2h1v1h-1zM25 2h1v1h-1zM15 3h1v1h-1zM17 3h1v1h-1zM19 3h2v1h-2zM22 3h1v1h-1zM24 3h1v1h-1zM26 3h1v1h-1zM23 4h1v1h-1zM25 4h1v1h-1zM13 5h1v1h-1zM17 5h1v1h-1zM19 5h1v1h-1zM21 5h2v1h-2zM24 5h1v1h-1zM26 5h1v1h-1zM21 6h1v1h-1zM23 6h1v1h-1zM25 6h1v1h-1zM15 7h1v1h-1zM17 7h1v1h-1zM19 7h2v1h-2zM22 7h1v1h-1zM24 7h1v1h-1zM26 7h1v1h-1zM23 8h1v1h-1zM25 8h1v1h-1zM13 9h1v1h-1zM15 9h1v1h-1zM17 9h1v1h-1zM19 9h1v1h-1zM21 9h2v1h-2zM24 9h1v1h-1zM26 9h1v1h-1zM17 10h1v1h-1zM21 10h1v1h-1zM23 10h1v1h-1zM25 10h1v1h-1zM11 11h1v1h-1zM13 11h1v1h-1zM15 11h1v1h-1zM19 11h2v1h-2zM22 11h1v1h-1zM24 11h1v1h-1zM26 11h1v1h-1zM19 12h1v1h-1zM21 12h1v1h-1zM23 12h1v1h-1zM25 12h1v1h-1zM1 13h1v1h-1zM5 13h1v1h-1zM9 13h1v1h-1zM11 13h1v1h-1zM13 13h1v1h-1zM15 13h1v1h-1zM17 13h2v1h-2zM22 13h1v1h-1zM24 13h1v1h-1zM26 13h1v1h-1zM17 14h1v1h-1zM19 14h1v1h-1zM21 14h1v1h-1zM23 14h1v1h-1zM25 14h1v1h-1zM1 15h1v1h-1zM3 15h1v1h-1zM5 15h1v1h-1zM7 15h1v1h-1zM9 15h1v1h-1zM11 15h1v1h-1zM13 15h1v1h-1zM15 15h2v1h-2zM18 15h1v1h-1zM20 15h1v1h-1zM22 15h1v1h-1zM24 15h1v1h-1zM26 15h1v1h-1zM15 16h1v1h-1zM19 16h1v1h-1zM21 16h1v1h-1zM23 16h1v1h-1zM25 16h1v1h-1zM1 17h1v1h-1zM3 17h1v1h-1zM5 17h1v1h-1zM7 17h1v1h-1zM9 17h1v1h-1zM11 17h1v1h-1zM13 17h2v1h-2zM17 17h2v1h-2zM20 17h1v1h-1zM22 17h1v1h-1zM24 17h1v1h-1zM26 17h1v1h-1zM5 18h1v1h-1zM9 18h1v1h-1zM13 18h1v1h-1zM15 18h1v1h-1zM17 18h1v1h-1zM19 18h1v1h-1zM21 18h1v1h-1zM23 18h1v1h-1zM25 18h1v1h-1zM0 19h1v1h-1zM3 19h2v1h-2zM7 19h2v1h-2zM11 19h2v1h-2zM14 19h1v1h-1zM16 19h1v1h-1zM18 19h1v1h-1zM20 19h1v1h-1zM22 19h1v1h-1zM24 19h1v1h-1zM26 19h1v1h-1zM3 20h1v1h-1zM7 20h1v1h-1zM11 20h1v1h-1zM15 20h1v1h-1zM17 20h1v1h-1zM19 20h1v1h-1zM21 20h1v1h-1zM23 20h1v1h-1zM25 20h1v1h-1zM1 21h2v1h-2zM5 21h2v1h-2zM10 21h1v1h-1zM12 21h1v1h-1zM14 21h1v1h-1zM16 21h1v1h-1zM18 21h1v1h-1zM20 21h1v1h-1zM22 21h1v1h-1zM24 21h1v1h-1zM26 21h1v1h-1zM1 22h1v1h-1zM3 22h1v1h-1zM5 22h1v1h-1zM7 22h1v1h-1zM9 22h1v1h-1zM11 22h1v1h-1zM13 22h1v1h-1zM15 22h1v1h-1zM17 22h1v1h-1zM19 22h1v1h-1zM21 22h1v1h-1zM23 22h1v1h-1zM25 22h1v1h-1zM0 23h1v1h-1zM2 23h1v1h-1zM4 23h1v1h-1zM6 23h1v1h-1zM8 23h1v1h-1zM10 23h1v1h-1zM12 23h1v1h-1zM14 23h1v1h-1zM16 23h1v1h-1zM18 23h1v1h-1zM20 23h1v1h-1zM22 23h1v1h-1zM24 23h1v1h-1zM26 23h1v1h-1zM1 24h1v1h-1zM3 24h1v1h-1zM5 24h1v1h-1zM7 24h1v1h-1zM9 24h1v1h-1zM11 24h1v1h-1zM13 24h1v1h-1zM15 24h1v1h-1zM17 24h1v1h-1zM19 24h1v1h-1zM21 24h1v1h-1zM23 24h1v1h-1zM25 24h1v1h-1zM0 25h1v1h-1zM2 25h1v1h-1zM4 25h1v1h-1zM6 25h1v1h-1zM8 25h1v1h-1zM10 25h1v1h-1zM12 25h1v1h-1zM14 25h1v1h-1zM16 25h1v1h-1zM18 25h1v1h-1zM20 25h1v1h-1zM22 25h1v1h-1zM24 25h1v1h-1zM26 25h1v1h-1zM1 26h1v1h-1zM3 26h1v1h-1zM5 26h1v1h-1zM7 26h1v1h-1zM9 26h1v1h-1zM11 26h1v1h-1zM13 26h1v1h-1zM15 26h1v1h-1zM17 26h1v1h-1zM19 26h1v1h-1zM21 26h1v1h-1zM23 26h1v1h-1zM25 26h1v1h-1z"/><path fill="#946772" d="M24 0h1v1h-1zM26 0h1v1h-1zM25 1h1v1h-1zM24 2h1v1h-1zM26 2h1v1h-1zM25 3h1v1h-1zM24 4h1v1h-1zM26 4h1v1h-1zM25 5h1v1h-1zM24 6h1v1h-1zM26 6h1v1h-1zM25 7h1v1h-1zM24 8h1v1h-1zM26 8h1v1h-1zM25 9h1v1h-1zM24 10h1v1h-1zM26 10h1v1h-1zM25 11h1v1h-1zM24 12h1v1h-1zM26 12h1v1h-1zM25 13h1v1h-1zM24 14h1v1h-1zM26 14h1v1h-1zM23 15h1v1h-1zM25 15h1v1h-1zM24 16h1v1h-1zM26 16h1v1h-1zM23 17h1v1h-1zM25 17h1v1h-1zM24 18h1v1h-1zM26 18h1v1h-1zM23 19h1v1h-1zM25 19h1v1h-1zM22 20h1v1h-1zM24 20h1v1h-1zM26 20h1v1h-1zM23 21h1v1h-1zM25 21h1v1h-1zM22 22h1v1h-1zM24 22h1v1h-1zM26 22h1v1h-1zM19 23h1v1h-1zM21 23h1v1h-1zM23 23h1v1h-1zM25 23h1v1h-1zM0 24h1v1h-1zM2 24h1v1h-1zM4 24h1v1h-1zM6 24h1v1h-1zM8 24h1v1h-1zM10 24h1v1h-1zM12 24h1v1h-1zM14 24h1v1h-1zM16 24h1v1h-1zM18 24h1v1h-1zM20 24h1v1h-1zM22 24h1v1h-1zM24 24h1v1h-1zM26 24h1v1h-1zM1 25h1v1h-1zM3 25h1v1h-1zM5 25h1v1h-1zM7 25h1v1h-1zM9 25h1v1h-1zM11 25h1v1h-1zM13 25h1v1h-1zM15 25h1v1h-1zM17 25h1v1h-1zM19 25h1v1h-1zM21 25h1v1h-1zM23 25h1v1h-1zM25 25h1v1h-1zM0 26h1v1h-1zM2 26h1v1h-1zM4 26h1v1h-1zM6 26h1v1h-1zM8 26h1v1h-1zM10 26h1v1h-1zM12 26h1v1h-1zM14 26h1v1h-1zM16 26h1v1h-1zM18 26h1v1h-1zM20 26h1v1h-1zM22 26h1v1h-1zM24 26h1v1h-1zM26 26h1v1h-1z"/><path fill="#b6c2c8" d="M10 6h1v1h-1zM8 8h1v1h-1z"/><path fill="#3c4248" d="M19 6h1v1h-1zM8 7h5v1h-5zM18 7h1v1h-1zM9 8h1v1h-1zM11 8h1v1h-1zM17 8h1v1h-1zM19 8h1v1h-1zM21 8h1v1h-1zM7 9h5v1h-5zM20 9h1v1h-1zM9 10h1v1h-1zM8 11h1v1h-1z"/><path fill="#90999e" d="M21 7h1v1h-1zM20 8h1v1h-1zM18 10h1v1h-1zM20 10h1v1h-1zM21 11h1v1h-1zM18 12h1v1h-1zM20 12h1v1h-1zM19 13h1v1h-1zM21 13h1v1h-1zM18 14h1v1h-1zM20 14h1v1h-1zM17 15h1v1h-1zM19 15h1v1h-1zM21 15h1v1h-1zM16 16h1v1h-1zM18 16h1v1h-1zM20 16h1v1h-1zM15 17h1v1h-1zM19 17h1v1h-1zM10 18h1v1h-1zM12 18h1v1h-1zM14 18h1v1h-1zM16 18h1v1h-1zM18 18h1v1h-1zM9 19h1v1h-1zM13 19h1v1h-1zM15 19h1v1h-1zM17 19h1v1h-1zM10 20h1v1h-1zM12 20h1v1h-1zM14 20h1v1h-1zM16 20h1v1h-1zM9 21h1v1h-1zM11 21h1v1h-1zM13 21h1v1h-1zM15 21h1v1h-1zM10 22h1v1h-1zM12 22h1v1h-1z"/><path fill="#aab4ba" d="M10 8h1v1h-1zM12 8h1v1h-1zM8 10h1v1h-1zM10 10h1v1h-1zM12 10h1v1h-1zM10 12h1v1h-1z"/><path fill="#465058" d="M15 8h1v1h-1zM12 9h1v1h-1zM14 9h1v1h-1zM16 9h1v1h-1zM18 9h1v1h-1zM11 10h1v1h-1zM13 10h1v1h-1zM15 10h1v1h-1zM19 10h1v1h-1zM9 11h2v1h-2zM12 11h1v1h-1zM14 11h1v1h-1zM16 11h1v1h-1zM18 11h1v1h-1zM9 12h1v1h-1zM11 12h1v1h-1zM13 12h1v1h-1zM15 12h1v1h-1zM17 12h1v1h-1zM8 13h1v1h-1zM10 13h1v1h-1zM12 13h1v1h-1zM14 13h1v1h-1zM16 13h1v1h-1zM20 13h1v1h-1zM9 14h1v1h-1zM11 14h1v1h-1zM13 14h1v1h-1zM15 14h1v1h-1zM8 15h1v1h-1zM10 15h1v1h-1zM12 15h1v1h-1zM14 15h1v1h-1zM7 16h1v1h-1zM9 16h1v1h-1zM11 16h1v1h-1zM13 16h1v1h-1zM17 16h1v1h-1zM8 17h1v1h-1zM10 17h1v1h-1zM12 17h1v1h-1zM16 17h1v1h-1zM11 18h1v1h-1zM10 19h1v1h-1zM9 20h1v1h-1zM13 20h1v1h-1z"/><path fill="#9da6ac" d="M18 8h1v1h-1zM14 10h1v1h-1zM16 10h1v1h-1zM17 11h1v1h-1zM12 12h1v1h-1zM14 12h1v1h-1zM16 12h1v1h-1zM8 14h1v1h-1zM10 14h1v1h-1zM12 14h1v1h-1zM14 14h1v1h-1zM16 14h1v1h-1zM8 16h1v1h-1zM10 16h1v1h-1zM12 16h1v1h-1zM14 16h1v1h-1zM8 18h1v1h-1z"/><path fill="#838b90" d="M22 14h1v1h-1zM22 16h1v1h-1zM21 17h1v1h-1zM20 18h1v1h-1zM22 18h1v1h-1zM19 19h1v1h-1zM21 19h1v1h-1zM18 20h1v1h-1zM20 20h1v1h-1zM17 21h1v1h-1zM19 21h1v1h-1zM21 21h1v1h-1zM14 22h1v1h-1zM16 22h1v1h-1zM18 22h1v1h-1zM20 22h1v1h-1zM13 23h1v1h-1zM15 23h1v1h-1zM17 23h1v1h-1z"/></svg><svg class="px" style="position:absolute;left:312px;top:79px;outline:1px solid #050505" width="62" height="62" viewBox="-2 -2 31 31"><rect x="-2" y="-2" width="31" height="31" fill="#9c9c98"/><path fill="#b8ebeb" d="M0 0h1v1h-1z"/><path fill="#205c5c" d="M1 0h3v1h-3zM5 0h1v1h-1zM7 0h1v1h-1zM9 0h1v1h-1zM11 0h1v1h-1zM13 0h1v1h-1zM15 0h1v1h-1zM17 0h1v1h-1zM19 0h1v1h-1zM21 0h1v1h-1zM0 1h13v1h-13zM14 1h3v1h-3zM18 1h1v1h-1zM20 1h1v1h-1zM0 2h2v1h-2zM3 2h3v1h-3zM7 2h1v1h-1zM9 2h1v1h-1zM11 2h1v1h-1zM13 2h1v1h-1zM15 2h1v1h-1zM17 2h1v1h-1zM19 2h1v1h-1zM0 3h15v1h-15zM16 3h1v1h-1zM18 3h1v1h-1zM1 4h3v1h-3zM5 4h1v1h-1zM7 4h1v1h-1zM9 4h1v1h-1zM11 4h1v1h-1zM13 4h1v1h-1zM15 4h1v1h-1zM17 4h1v1h-1zM19 4h1v1h-1zM21 4h1v1h-1zM0 5h1v1h-1zM6 5h7v1h-7zM14 5h3v1h-3zM18 5h1v1h-1zM20 5h1v1h-1zM7 6h1v1h-1zM9 6h1v1h-1zM11 6h1v1h-1zM13 6h1v1h-1zM15 6h1v1h-1zM17 6h1v1h-1zM19 6h1v1h-1z"/><path fill="#addcdc" d="M4 0h1v1h-1zM6 0h1v1h-1zM2 2h1v1h-1zM6 2h1v1h-1zM0 4h1v1h-1zM4 4h1v1h-1zM6 4h1v1h-1z"/><path fill="#a1cece" d="M8 0h1v1h-1zM10 0h1v1h-1zM8 2h1v1h-1zM10 2h1v1h-1zM8 4h1v1h-1zM10 4h1v1h-1zM8 6h1v1h-1zM10 6h1v1h-1z"/><path fill="#96bfbf" d="M12 0h1v1h-1zM14 0h1v1h-1zM12 2h1v1h-1zM14 2h1v1h-1zM12 4h1v1h-1zM14 4h1v1h-1zM12 6h1v1h-1zM14 6h1v1h-1z"/><path fill="#8bb1b1" d="M16 0h1v1h-1zM18 0h1v1h-1zM16 2h1v1h-1zM18 2h1v1h-1zM16 4h1v1h-1zM18 4h1v1h-1zM16 6h1v1h-1zM18 6h1v1h-1z"/><path fill="#7fa2a2" d="M20 0h1v1h-1zM22 0h1v1h-1zM23 1h1v1h-1zM20 2h1v1h-1zM22 2h1v1h-1zM21 3h1v1h-1zM23 3h1v1h-1zM20 4h1v1h-1zM22 4h1v1h-1zM23 5h1v1h-1zM20 6h1v1h-1zM22 6h1v1h-1z"/><path fill="#040404" d="M23 0h1v1h-1zM25 0h1v1h-1zM13 1h1v1h-1zM17 1h1v1h-1zM19 1h1v1h-1zM21 1h2v1h-2zM24 1h1v1h-1zM26 1h1v1h-1zM21 2h1v1h-1zM23 2h1v1h-1zM25 2h1v1h-1zM15 3h1v1h-1zM17 3h1v1h-1zM19 3h2v1h-2zM22 3h1v1h-1zM24 3h1v1h-1zM26 3h1v1h-1zM23 4h1v1h-1zM25 4h1v1h-1zM13 5h1v1h-1zM17 5h1v1h-1zM19 5h1v1h-1zM21 5h2v1h-2zM24 5h1v1h-1zM26 5h1v1h-1zM21 6h1v1h-1zM23 6h1v1h-1zM25 6h1v1h-1zM15 7h1v1h-1zM17 7h1v1h-1zM19 7h2v1h-2zM22 7h1v1h-1zM24 7h1v1h-1zM26 7h1v1h-1zM23 8h1v1h-1zM25 8h1v1h-1zM13 9h1v1h-1zM17 9h1v1h-1zM19 9h1v1h-1zM21 9h2v1h-2zM24 9h1v1h-1zM26 9h1v1h-1zM21 10h1v1h-1zM23 10h1v1h-1zM25 10h1v1h-1zM11 11h1v1h-1zM13 11h1v1h-1zM15 11h1v1h-1zM17 11h1v1h-1zM19 11h2v1h-2zM22 11h1v1h-1zM24 11h1v1h-1zM26 11h1v1h-1zM19 12h1v1h-1zM23 12h1v1h-1zM25 12h1v1h-1zM1 13h1v1h-1zM5 13h1v1h-1zM9 13h1v1h-1zM13 13h1v1h-1zM15 13h1v1h-1zM17 13h2v1h-2zM21 13h2v1h-2zM24 13h1v1h-1zM26 13h1v1h-1zM17 14h1v1h-1zM21 14h1v1h-1zM23 14h1v1h-1zM25 14h1v1h-1zM1 15h1v1h-1zM3 15h1v1h-1zM5 15h1v1h-1zM7 15h1v1h-1zM9 15h1v1h-1zM11 15h1v1h-1zM13 15h1v1h-1zM15 15h2v1h-2zM20 15h1v1h-1zM22 15h1v1h-1zM24 15h1v1h-1zM26 15h1v1h-1zM19 16h1v1h-1zM21 16h1v1h-1zM23 16h1v1h-1zM25 16h1v1h-1zM1 17h1v1h-1zM3 17h1v1h-1zM5 17h1v1h-1zM7 17h1v1h-1zM9 17h1v1h-1zM11 17h1v1h-1zM13 17h1v1h-1zM15 17h1v1h-1zM17 17h2v1h-2zM22 17h1v1h-1zM24 17h1v1h-1zM26 17h1v1h-1zM5 18h1v1h-1zM13 18h1v1h-1zM17 18h1v1h-1zM19 18h1v1h-1zM21 18h1v1h-1zM23 18h1v1h-1zM25 18h1v1h-1zM0 19h1v1h-1zM3 19h2v1h-2zM7 19h2v1h-2zM11 19h2v1h-2zM15 19h2v1h-2zM18 19h1v1h-1zM20 19h1v1h-1zM22 19h1v1h-1zM24 19h1v1h-1zM26 19h1v1h-1zM3 20h1v1h-1zM7 20h1v1h-1zM11 20h1v1h-1zM15 20h1v1h-1zM17 20h1v1h-1zM19 20h1v1h-1zM21 20h1v1h-1zM23 20h1v1h-1zM25 20h1v1h-1zM1 21h2v1h-2zM5 21h2v1h-2zM9 21h2v1h-2zM13 21h2v1h-2zM16 21h1v1h-1zM18 21h1v1h-1zM20 21h1v1h-1zM22 21h1v1h-1zM24 21h1v1h-1zM26 21h1v1h-1zM1 22h1v1h-1zM3 22h1v1h-1zM5 22h1v1h-1zM7 22h1v1h-1zM9 22h1v1h-1zM11 22h1v1h-1zM13 22h1v1h-1zM15 22h1v1h-1zM17 22h1v1h-1zM19 22h1v1h-1zM21 22h1v1h-1zM23 22h1v1h-1zM25 22h1v1h-1zM0 23h1v1h-1zM2 23h1v1h-1zM4 23h1v1h-1zM6 23h1v1h-1zM8 23h1v1h-1zM10 23h1v1h-1zM12 23h1v1h-1zM14 23h1v1h-1zM16 23h1v1h-1zM18 23h1v1h-1zM20 23h1v1h-1zM22 23h1v1h-1zM24 23h1v1h-1zM26 23h1v1h-1zM1 24h1v1h-1zM3 24h1v1h-1zM5 24h1v1h-1zM7 24h1v1h-1zM9 24h1v1h-1zM11 24h1v1h-1zM13 24h1v1h-1zM15 24h1v1h-1zM17 24h1v1h-1zM19 24h1v1h-1zM21 24h1v1h-1zM23 24h1v1h-1zM25 24h1v1h-1zM0 25h1v1h-1zM2 25h1v1h-1zM4 25h1v1h-1zM6 25h1v1h-1zM8 25h1v1h-1zM10 25h1v1h-1zM12 25h1v1h-1zM14 25h1v1h-1zM16 25h1v1h-1zM18 25h1v1h-1zM20 25h1v1h-1zM22 25h1v1h-1zM24 25h1v1h-1zM26 25h1v1h-1zM1 26h1v1h-1zM3 26h1v1h-1zM5 26h1v1h-1zM7 26h1v1h-1zM9 26h1v1h-1zM11 26h1v1h-1zM13 26h1v1h-1zM15 26h1v1h-1zM17 26h1v1h-1zM19 26h1v1h-1zM21 26h1v1h-1zM23 26h1v1h-1zM25 26h1v1h-1z"/><path fill="#749494" d="M24 0h1v1h-1zM26 0h1v1h-1zM25 1h1v1h-1zM24 2h1v1h-1zM26 2h1v1h-1zM25 3h1v1h-1zM24 4h1v1h-1zM26 4h1v1h-1zM25 5h1v1h-1zM24 6h1v1h-1zM26 6h1v1h-1z"/><path fill="#0c3414" d="M1 5h5v1h-5zM0 6h2v1h-2zM3 6h3v1h-3zM0 7h8v1h-8zM1 8h1v1h-1zM3 8h1v1h-1zM5 8h1v1h-1zM7 8h1v1h-1zM0 9h9v1h-9zM1 10h1v1h-1zM3 10h1v1h-1zM5 10h1v1h-1zM7 10h1v1h-1zM0 11h9v1h-9zM1 12h1v1h-1zM3 12h1v1h-1zM5 12h1v1h-1zM7 12h1v1h-1zM0 13h1v1h-1zM2 13h3v1h-3zM6 13h2v1h-2zM1 14h1v1h-1zM3 14h1v1h-1zM5 14h1v1h-1zM2 15h1v1h-1zM4 15h1v1h-1zM3 16h1v1h-1zM4 17h1v1h-1zM3 18h1v1h-1z"/><path fill="#98dcad" d="M2 6h1v1h-1z"/><path fill="#8ecea1" d="M6 6h1v1h-1zM0 8h1v1h-1zM2 8h1v1h-1zM4 8h1v1h-1zM6 8h1v1h-1zM8 8h1v1h-1zM0 10h1v1h-1zM2 10h1v1h-1zM4 10h1v1h-1zM6 10h1v1h-1z"/><path fill="#1a4e50" d="M8 7h7v1h-7zM16 7h1v1h-1zM18 7h1v1h-1zM9 8h1v1h-1zM11 8h1v1h-1zM13 8h1v1h-1zM15 8h1v1h-1zM17 8h1v1h-1zM19 8h1v1h-1zM21 8h1v1h-1zM9 9h4v1h-4zM14 9h3v1h-3zM18 9h1v1h-1zM20 9h1v1h-1zM9 10h1v1h-1zM11 10h1v1h-1zM13 10h1v1h-1zM15 10h1v1h-1zM17 10h1v1h-1zM19 10h1v1h-1zM9 11h2v1h-2zM12 11h1v1h-1zM14 11h1v1h-1zM16 11h1v1h-1zM18 11h1v1h-1zM9 12h1v1h-1zM11 12h1v1h-1zM13 12h1v1h-1zM15 12h1v1h-1zM17 12h1v1h-1zM21 12h1v1h-1zM8 13h1v1h-1zM10 13h3v1h-3zM14 13h1v1h-1zM16 13h1v1h-1zM20 13h1v1h-1zM7 14h1v1h-1zM9 14h1v1h-1zM11 14h1v1h-1zM13 14h1v1h-1zM15 14h1v1h-1zM19 14h1v1h-1zM0 15h1v1h-1zM6 15h1v1h-1zM8 15h1v1h-1zM10 15h1v1h-1zM12 15h1v1h-1zM14 15h1v1h-1zM18 15h1v1h-1zM1 16h1v1h-1zM5 16h1v1h-1zM7 16h1v1h-1zM9 16h1v1h-1zM11 16h1v1h-1zM13 16h1v1h-1zM15 16h1v1h-1zM17 16h1v1h-1zM0 17h1v1h-1zM2 17h1v1h-1zM6 17h1v1h-1zM8 17h1v1h-1zM10 17h1v1h-1zM12 17h1v1h-1zM14 17h1v1h-1zM16 17h1v1h-1zM20 17h1v1h-1zM1 18h1v1h-1zM7 18h1v1h-1zM9 18h1v1h-1zM11 18h1v1h-1zM15 18h1v1h-1zM2 19h1v1h-1zM6 19h1v1h-1zM10 19h1v1h-1zM14 19h1v1h-1zM1 20h1v1h-1zM5 20h1v1h-1zM9 20h1v1h-1zM13 20h1v1h-1z"/><path fill="#7da29f" d="M21 7h1v1h-1zM23 7h1v1h-1zM20 8h1v1h-1zM22 8h1v1h-1zM23 9h1v1h-1zM20 10h1v1h-1zM22 10h1v1h-1zM21 11h1v1h-1zM23 11h1v1h-1zM20 12h1v1h-1zM22 12h1v1h-1zM19 13h1v1h-1zM23 13h1v1h-1zM20 14h1v1h-1zM22 14h1v1h-1zM19 15h1v1h-1zM21 15h1v1h-1zM18 16h1v1h-1zM20 16h1v1h-1zM22 16h1v1h-1zM19 17h1v1h-1zM21 17h1v1h-1zM16 18h1v1h-1zM18 18h1v1h-1zM20 18h1v1h-1zM13 19h1v1h-1zM17 19h1v1h-1zM19 19h1v1h-1zM0 20h1v1h-1zM2 20h1v1h-1zM6 20h1v1h-1zM8 20h1v1h-1zM10 20h1v1h-1zM12 20h1v1h-1zM14 20h1v1h-1zM16 20h1v1h-1zM18 20h1v1h-1zM20 20h1v1h-1z"/><path fill="#729491" d="M25 7h1v1h-1zM24 8h1v1h-1zM26 8h1v1h-1zM25 9h1v1h-1zM24 10h1v1h-1zM26 10h1v1h-1zM25 11h1v1h-1zM24 12h1v1h-1zM26 12h1v1h-1zM25 13h1v1h-1zM24 14h1v1h-1zM26 14h1v1h-1zM23 15h1v1h-1zM25 15h1v1h-1zM24 16h1v1h-1zM26 16h1v1h-1zM23 17h1v1h-1zM25 17h1v1h-1zM22 18h1v1h-1zM24 18h1v1h-1zM26 18h1v1h-1zM21 19h1v1h-1zM23 19h1v1h-1zM25 19h1v1h-1zM22 20h1v1h-1zM24 20h1v1h-1zM26 20h1v1h-1z"/><path fill="#93bfbc" d="M10 8h1v1h-1zM12 8h1v1h-1zM14 8h1v1h-1zM10 10h1v1h-1zM12 10h1v1h-1zM14 10h1v1h-1zM10 12h1v1h-1zM12 12h1v1h-1zM8 14h1v1h-1zM10 14h1v1h-1z"/><path fill="#88b1ad" d="M16 8h1v1h-1zM18 8h1v1h-1zM16 10h1v1h-1zM18 10h1v1h-1zM14 12h1v1h-1zM16 12h1v1h-1zM18 12h1v1h-1zM12 14h1v1h-1zM14 14h1v1h-1zM16 14h1v1h-1zM18 14h1v1h-1zM17 15h1v1h-1zM0 16h1v1h-1zM6 16h1v1h-1zM8 16h1v1h-1zM10 16h1v1h-1zM12 16h1v1h-1zM14 16h1v1h-1zM16 16h1v1h-1zM0 18h1v1h-1zM2 18h1v1h-1zM6 18h1v1h-1zM8 18h1v1h-1zM10 18h1v1h-1zM12 18h1v1h-1zM14 18h1v1h-1zM1 19h1v1h-1zM5 19h1v1h-1zM9 19h1v1h-1z"/><path fill="#84bf96" d="M8 10h1v1h-1zM0 12h1v1h-1zM2 12h1v1h-1zM4 12h1v1h-1zM6 12h1v1h-1zM8 12h1v1h-1zM0 14h1v1h-1zM2 14h1v1h-1zM4 14h1v1h-1zM6 14h1v1h-1z"/><path fill="#7ab18b" d="M2 16h1v1h-1zM4 16h1v1h-1zM4 18h1v1h-1z"/><path fill="#70a27f" d="M4 20h1v1h-1z"/><path fill="#686420" d="M0 21h1v1h-1zM4 21h1v1h-1zM8 21h1v1h-1zM12 21h1v1h-1z"/><path fill="#a2a26b" d="M3 21h1v1h-1zM7 21h1v1h-1zM11 21h1v1h-1zM15 21h1v1h-1zM17 21h1v1h-1zM0 22h1v1h-1zM2 22h1v1h-1zM4 22h1v1h-1zM6 22h1v1h-1zM8 22h1v1h-1zM10 22h1v1h-1zM12 22h1v1h-1zM14 22h1v1h-1zM16 22h1v1h-1zM1 23h1v1h-1zM3 23h1v1h-1zM5 23h1v1h-1zM7 23h1v1h-1zM9 23h1v1h-1zM11 23h1v1h-1zM13 23h1v1h-1z"/><path fill="#949461" d="M19 21h1v1h-1zM21 21h1v1h-1zM23 21h1v1h-1zM25 21h1v1h-1zM18 22h1v1h-1zM20 22h1v1h-1zM22 22h1v1h-1zM24 22h1v1h-1zM26 22h1v1h-1zM15 23h1v1h-1zM17 23h1v1h-1zM19 23h1v1h-1zM21 23h1v1h-1zM23 23h1v1h-1zM25 23h1v1h-1zM0 24h1v1h-1zM2 24h1v1h-1zM4 24h1v1h-1zM6 24h1v1h-1zM8 24h1v1h-1zM10 24h1v1h-1zM12 24h1v1h-1zM14 24h1v1h-1zM16 24h1v1h-1zM18 24h1v1h-1zM20 24h1v1h-1zM22 24h1v1h-1zM24 24h1v1h-1zM26 24h1v1h-1zM1 25h1v1h-1zM3 25h1v1h-1zM5 25h1v1h-1zM7 25h1v1h-1zM9 25h1v1h-1zM11 25h1v1h-1zM13 25h1v1h-1zM15 25h1v1h-1zM17 25h1v1h-1zM19 25h1v1h-1zM21 25h1v1h-1zM23 25h1v1h-1zM25 25h1v1h-1zM0 26h1v1h-1zM2 26h1v1h-1zM4 26h1v1h-1zM6 26h1v1h-1zM8 26h1v1h-1zM10 26h1v1h-1zM12 26h1v1h-1zM14 26h1v1h-1zM16 26h1v1h-1zM18 26h1v1h-1zM20 26h1v1h-1zM22 26h1v1h-1zM24 26h1v1h-1zM26 26h1v1h-1z"/></svg><svg class="px" style="position:absolute;left:398px;top:79px;outline:1px solid #050505" width="62" height="62" viewBox="-2 -2 31 31"><rect x="-2" y="-2" width="31" height="31" fill="#9c9c98"/><path fill="#e0e0d5" d="M0 0h1v1h-1z"/><path fill="#2c2c2a" d="M1 0h3v1h-3zM5 0h1v1h-1zM7 0h1v1h-1zM9 0h1v1h-1zM11 0h1v1h-1zM13 0h1v1h-1zM15 0h1v1h-1zM17 0h1v1h-1zM19 0h1v1h-1zM21 0h1v1h-1zM0 1h13v1h-13zM14 1h1v1h-1zM16 1h1v1h-1zM18 1h1v1h-1zM20 1h1v1h-1zM0 2h2v1h-2zM3 2h2v1h-2zM9 2h1v1h-1zM11 2h1v1h-1zM13 2h1v1h-1zM15 2h1v1h-1zM17 2h1v1h-1zM0 3h4v1h-4zM9 3h2v1h-2zM12 3h3v1h-3zM16 3h1v1h-1zM1 4h1v1h-1zM11 4h1v1h-1zM13 4h1v1h-1zM15 4h1v1h-1zM0 5h3v1h-3zM10 5h3v1h-3zM14 5h1v1h-1zM1 6h1v1h-1zM11 6h1v1h-1zM13 6h1v1h-1zM0 7h4v1h-4zM9 7h2v1h-2zM12 7h3v1h-3zM1 8h1v1h-1zM3 8h1v1h-1zM9 8h1v1h-1zM11 8h1v1h-1zM13 8h1v1h-1zM15 8h1v1h-1zM0 9h13v1h-13zM14 9h1v1h-1zM16 9h1v1h-1zM1 10h1v1h-1zM3 10h1v1h-1zM5 10h1v1h-1zM7 10h1v1h-1zM9 10h1v1h-1zM11 10h1v1h-1zM13 10h1v1h-1zM15 10h1v1h-1zM17 10h1v1h-1zM0 11h3v1h-3zM4 11h3v1h-3zM8 11h3v1h-3zM12 11h1v1h-1zM14 11h1v1h-1zM16 11h1v1h-1zM18 11h1v1h-1zM1 12h1v1h-1zM3 12h1v1h-1zM5 12h1v1h-1zM7 12h1v1h-1zM9 12h1v1h-1zM11 12h1v1h-1zM13 12h1v1h-1zM15 12h1v1h-1zM17 12h1v1h-1zM21 12h1v1h-1zM0 13h1v1h-1zM2 13h3v1h-3zM6 13h3v1h-3zM10 13h3v1h-3zM14 13h1v1h-1zM16 13h1v1h-1zM20 13h1v1h-1zM1 14h1v1h-1zM3 14h1v1h-1zM5 14h1v1h-1zM7 14h1v1h-1zM9 14h1v1h-1zM11 14h1v1h-1zM13 14h1v1h-1zM15 14h1v1h-1zM0 15h1v1h-1zM2 15h1v1h-1zM4 15h1v1h-1zM6 15h1v1h-1zM8 15h1v1h-1zM10 15h1v1h-1zM12 15h1v1h-1zM14 15h1v1h-1zM1 16h1v1h-1zM3 16h1v1h-1zM5 16h1v1h-1zM7 16h1v1h-1zM9 16h1v1h-1zM11 16h1v1h-1zM13 16h1v1h-1zM15 16h1v1h-1zM17 16h1v1h-1zM0 17h1v1h-1zM2 17h1v1h-1zM4 17h1v1h-1zM6 17h1v1h-1zM8 17h1v1h-1zM10 17h1v1h-1zM12 17h1v1h-1zM16 17h1v1h-1zM3 18h1v1h-1zM7 18h1v1h-1zM11 18h1v1h-1zM15 18h1v1h-1zM2 19h1v1h-1zM6 19h1v1h-1zM10 19h1v1h-1zM1 20h1v1h-1zM5 20h1v1h-1zM9 20h1v1h-1zM13 20h1v1h-1zM0 21h1v1h-1zM4 21h1v1h-1zM12 21h1v1h-1z"/><path fill="#d3d3c8" d="M4 0h1v1h-1zM2 2h1v1h-1zM0 4h1v1h-1zM2 4h1v1h-1z"/><path fill="#c5c5bb" d="M6 0h1v1h-1zM8 0h1v1h-1zM10 0h1v1h-1zM8 2h1v1h-1zM10 2h1v1h-1zM0 6h1v1h-1zM2 6h1v1h-1zM0 8h1v1h-1zM2 8h1v1h-1zM4 8h1v1h-1zM8 8h1v1h-1zM0 10h1v1h-1zM2 10h1v1h-1z"/><path fill="#b7b7ae" d="M12 0h1v1h-1zM14 0h1v1h-1zM12 2h1v1h-1zM14 2h1v1h-1zM10 4h1v1h-1zM12 4h1v1h-1zM14 4h1v1h-1zM10 6h1v1h-1zM12 6h1v1h-1zM14 6h1v1h-1zM10 8h1v1h-1zM12 8h1v1h-1zM14 8h1v1h-1zM4 10h1v1h-1zM6 10h1v1h-1zM8 10h1v1h-1zM10 10h1v1h-1zM12 10h1v1h-1zM0 12h1v1h-1zM2 12h1v1h-1zM4 12h1v1h-1zM6 12h1v1h-1zM8 12h1v1h-1zM10 12h1v1h-1zM12 12h1v1h-1zM0 14h1v1h-1zM2 14h1v1h-1zM4 14h1v1h-1zM6 14h1v1h-1zM8 14h1v1h-1z"/><path fill="#a9a9a1" d="M16 0h1v1h-1zM18 0h1v1h-1zM16 2h1v1h-1zM18 2h1v1h-1zM14 10h1v1h-1zM16 10h1v1h-1zM18 10h1v1h-1zM14 12h1v1h-1zM16 12h1v1h-1zM10 14h1v1h-1zM12 14h1v1h-1zM14 14h1v1h-1zM16 14h1v1h-1zM0 16h1v1h-1zM2 16h1v1h-1zM4 16h1v1h-1zM6 16h1v1h-1zM8 16h1v1h-1zM10 16h1v1h-1zM12 16h1v1h-1zM14 16h1v1h-1zM0 18h1v1h-1zM2 18h1v1h-1zM4 18h1v1h-1zM6 18h1v1h-1zM8 18h1v1h-1zM10 18h1v1h-1z"/><path fill="#9b9b94" d="M20 0h1v1h-1zM22 0h1v1h-1zM23 1h1v1h-1zM20 2h1v1h-1zM22 2h1v1h-1zM23 3h1v1h-1zM23 5h1v1h-1zM23 7h1v1h-1zM20 10h1v1h-1zM22 10h1v1h-1zM21 11h1v1h-1zM18 12h1v1h-1zM20 12h1v1h-1zM22 12h1v1h-1zM19 13h1v1h-1zM18 14h1v1h-1zM20 14h1v1h-1zM22 14h1v1h-1zM17 15h1v1h-1zM19 15h1v1h-1zM21 15h1v1h-1zM16 16h1v1h-1zM18 16h1v1h-1zM20 16h1v1h-1zM15 17h1v1h-1zM19 17h1v1h-1zM21 17h1v1h-1zM12 18h1v1h-1zM14 18h1v1h-1zM16 18h1v1h-1zM18 18h1v1h-1zM20 18h1v1h-1zM1 19h1v1h-1zM5 19h1v1h-1zM9 19h1v1h-1zM13 19h1v1h-1zM15 19h1v1h-1zM17 19h1v1h-1zM19 19h1v1h-1zM0 20h1v1h-1zM2 20h1v1h-1zM4 20h1v1h-1zM6 20h1v1h-1zM8 20h1v1h-1zM10 20h1v1h-1zM12 20h1v1h-1zM14 20h1v1h-1zM16 20h1v1h-1zM18 20h1v1h-1zM3 21h1v1h-1zM7 21h1v1h-1zM9 21h1v1h-1zM11 21h1v1h-1zM15 21h1v1h-1zM17 21h1v1h-1zM0 22h1v1h-1zM2 22h1v1h-1zM4 22h1v1h-1zM6 22h1v1h-1zM8 22h1v1h-1zM10 22h1v1h-1zM12 22h1v1h-1zM14 22h1v1h-1zM1 23h1v1h-1zM3 23h1v1h-1zM5 23h1v1h-1zM7 23h1v1h-1z"/><path fill="#040404" d="M23 0h1v1h-1zM25 0h1v1h-1zM13 1h1v1h-1zM15 1h1v1h-1zM17 1h1v1h-1zM19 1h1v1h-1zM21 1h2v1h-2zM24 1h1v1h-1zM26 1h1v1h-1zM21 2h1v1h-1zM23 2h1v1h-1zM25 2h1v1h-1zM11 3h1v1h-1zM15 3h1v1h-1zM17 3h1v1h-1zM19 3h2v1h-2zM22 3h1v1h-1zM24 3h1v1h-1zM26 3h1v1h-1zM23 4h1v1h-1zM25 4h1v1h-1zM13 5h1v1h-1zM15 5h1v1h-1zM17 5h1v1h-1zM19 5h1v1h-1zM21 5h2v1h-2zM24 5h1v1h-1zM26 5h1v1h-1zM21 6h1v1h-1zM23 6h1v1h-1zM25 6h1v1h-1zM11 7h1v1h-1zM15 7h1v1h-1zM17 7h1v1h-1zM19 7h2v1h-2zM22 7h1v1h-1zM24 7h1v1h-1zM26 7h1v1h-1zM23 8h1v1h-1zM25 8h1v1h-1zM13 9h1v1h-1zM15 9h1v1h-1zM17 9h1v1h-1zM19 9h1v1h-1zM21 9h2v1h-2zM24 9h1v1h-1zM26 9h1v1h-1zM21 10h1v1h-1zM23 10h1v1h-1zM25 10h1v1h-1zM3 11h1v1h-1zM7 11h1v1h-1zM11 11h1v1h-1zM13 11h1v1h-1zM15 11h1v1h-1zM17 11h1v1h-1zM19 11h2v1h-2zM22 11h1v1h-1zM24 11h1v1h-1zM26 11h1v1h-1zM19 12h1v1h-1zM23 12h1v1h-1zM25 12h1v1h-1zM1 13h1v1h-1zM5 13h1v1h-1zM9 13h1v1h-1zM13 13h1v1h-1zM15 13h1v1h-1zM17 13h2v1h-2zM21 13h2v1h-2zM24 13h1v1h-1zM26 13h1v1h-1zM17 14h1v1h-1zM19 14h1v1h-1zM21 14h1v1h-1zM23 14h1v1h-1zM25 14h1v1h-1zM1 15h1v1h-1zM3 15h1v1h-1zM5 15h1v1h-1zM7 15h1v1h-1zM9 15h1v1h-1zM11 15h1v1h-1zM13 15h1v1h-1zM15 15h2v1h-2zM18 15h1v1h-1zM20 15h1v1h-1zM22 15h1v1h-1zM24 15h1v1h-1zM26 15h1v1h-1zM19 16h1v1h-1zM21 16h1v1h-1zM23 16h1v1h-1zM25 16h1v1h-1zM1 17h1v1h-1zM3 17h1v1h-1zM5 17h1v1h-1zM7 17h1v1h-1zM9 17h1v1h-1zM11 17h1v1h-1zM13 17h2v1h-2zM17 17h2v1h-2zM20 17h1v1h-1zM22 17h1v1h-1zM24 17h1v1h-1zM26 17h1v1h-1zM1 18h1v1h-1zM5 18h1v1h-1zM9 18h1v1h-1zM13 18h1v1h-1zM17 18h1v1h-1zM19 18h1v1h-1zM21 18h1v1h-1zM23 18h1v1h-1zM25 18h1v1h-1zM0 19h1v1h-1zM3 19h2v1h-2zM7 19h2v1h-2zM11 19h2v1h-2zM14 19h1v1h-1zM16 19h1v1h-1zM18 19h1v1h-1zM20 19h1v1h-1zM22 19h1v1h-1zM24 19h1v1h-1zM26 19h1v1h-1zM3 20h1v1h-1zM7 20h1v1h-1zM11 20h1v1h-1zM15 20h1v1h-1zM17 20h1v1h-1zM19 20h1v1h-1zM21 20h1v1h-1zM23 20h1v1h-1zM25 20h1v1h-1zM1 21h2v1h-2zM5 21h2v1h-2zM8 21h1v1h-1zM10 21h1v1h-1zM13 21h2v1h-2zM16 21h1v1h-1zM18 21h1v1h-1zM20 21h1v1h-1zM22 21h1v1h-1zM24 21h1v1h-1zM26 21h1v1h-1zM1 22h1v1h-1zM3 22h1v1h-1zM5 22h1v1h-1zM7 22h1v1h-1zM9 22h1v1h-1zM11 22h1v1h-1zM13 22h1v1h-1zM15 22h1v1h-1zM17 22h1v1h-1zM19 22h1v1h-1zM21 22h1v1h-1zM23 22h1v1h-1zM25 22h1v1h-1zM0 23h1v1h-1zM2 23h1v1h-1zM4 23h1v1h-1zM6 23h1v1h-1zM8 23h1v1h-1zM10 23h1v1h-1zM12 23h1v1h-1zM14 23h1v1h-1zM16 23h1v1h-1zM18 23h1v1h-1zM20 23h1v1h-1zM22 23h1v1h-1zM24 23h1v1h-1zM26 23h1v1h-1zM1 24h1v1h-1zM3 24h1v1h-1zM5 24h1v1h-1zM7 24h1v1h-1zM9 24h1v1h-1zM11 24h1v1h-1zM13 24h1v1h-1zM15 24h1v1h-1zM17 24h1v1h-1zM19 24h1v1h-1zM21 24h1v1h-1zM23 24h1v1h-1zM25 24h1v1h-1zM0 25h1v1h-1zM2 25h1v1h-1zM4 25h1v1h-1zM6 25h1v1h-1zM8 25h1v1h-1zM10 25h1v1h-1zM12 25h1v1h-1zM14 25h1v1h-1zM16 25h1v1h-1zM18 25h1v1h-1zM20 25h1v1h-1zM22 25h1v1h-1zM24 25h1v1h-1zM26 25h1v1h-1zM1 26h1v1h-1zM3 26h1v1h-1zM5 26h1v1h-1zM7 26h1v1h-1zM9 26h1v1h-1zM11 26h1v1h-1zM13 26h1v1h-1zM15 26h1v1h-1zM17 26h1v1h-1zM19 26h1v1h-1zM21 26h1v1h-1zM23 26h1v1h-1zM25 26h1v1h-1z"/><path fill="#8e8e87" d="M24 0h1v1h-1zM26 0h1v1h-1zM25 1h1v1h-1zM24 2h1v1h-1zM26 2h1v1h-1zM25 3h1v1h-1zM24 4h1v1h-1zM26 4h1v1h-1zM25 5h1v1h-1zM24 6h1v1h-1zM26 6h1v1h-1zM25 7h1v1h-1zM24 8h1v1h-1zM26 8h1v1h-1zM23 9h1v1h-1zM25 9h1v1h-1zM24 10h1v1h-1zM26 10h1v1h-1zM23 11h1v1h-1zM25 11h1v1h-1zM24 12h1v1h-1zM26 12h1v1h-1zM23 13h1v1h-1zM25 13h1v1h-1zM24 14h1v1h-1zM26 14h1v1h-1zM23 15h1v1h-1zM25 15h1v1h-1zM22 16h1v1h-1zM24 16h1v1h-1zM26 16h1v1h-1zM23 17h1v1h-1zM25 17h1v1h-1zM22 18h1v1h-1zM24 18h1v1h-1zM26 18h1v1h-1zM21 19h1v1h-1zM23 19h1v1h-1zM25 19h1v1h-1zM20 20h1v1h-1zM22 20h1v1h-1zM24 20h1v1h-1zM26 20h1v1h-1zM19 21h1v1h-1zM21 21h1v1h-1zM23 21h1v1h-1zM25 21h1v1h-1zM16 22h1v1h-1zM18 22h1v1h-1zM20 22h1v1h-1zM22 22h1v1h-1zM24 22h1v1h-1zM26 22h1v1h-1zM9 23h1v1h-1zM11 23h1v1h-1zM13 23h1v1h-1zM15 23h1v1h-1zM17 23h1v1h-1zM19 23h1v1h-1zM21 23h1v1h-1zM23 23h1v1h-1zM25 23h1v1h-1zM0 24h1v1h-1zM2 24h1v1h-1zM4 24h1v1h-1zM6 24h1v1h-1zM8 24h1v1h-1zM10 24h1v1h-1zM12 24h1v1h-1zM14 24h1v1h-1zM16 24h1v1h-1zM18 24h1v1h-1zM20 24h1v1h-1zM22 24h1v1h-1zM24 24h1v1h-1zM26 24h1v1h-1zM1 25h1v1h-1zM3 25h1v1h-1zM5 25h1v1h-1zM7 25h1v1h-1zM9 25h1v1h-1zM11 25h1v1h-1zM13 25h1v1h-1zM15 25h1v1h-1zM17 25h1v1h-1zM19 25h1v1h-1zM21 25h1v1h-1zM23 25h1v1h-1zM25 25h1v1h-1zM0 26h1v1h-1zM2 26h1v1h-1zM4 26h1v1h-1zM6 26h1v1h-1zM8 26h1v1h-1zM10 26h1v1h-1zM12 26h1v1h-1zM14 26h1v1h-1zM16 26h1v1h-1zM18 26h1v1h-1zM20 26h1v1h-1zM22 26h1v1h-1zM24 26h1v1h-1zM26 26h1v1h-1z"/><path fill="#1a1e78" d="M5 2h1v1h-1zM7 2h1v1h-1zM4 3h5v1h-5zM3 4h1v1h-1zM5 4h1v1h-1zM7 4h1v1h-1zM9 4h1v1h-1zM3 5h7v1h-7zM3 6h3v1h-3zM7 6h1v1h-1zM9 6h1v1h-1zM4 7h5v1h-5zM5 8h1v1h-1zM7 8h1v1h-1z"/><path fill="#9398cf" d="M6 2h1v1h-1zM4 4h1v1h-1zM6 4h1v1h-1z"/><path fill="#5c5822" d="M19 2h1v1h-1zM18 3h1v1h-1zM17 4h1v1h-1zM19 4h1v1h-1zM21 4h1v1h-1zM16 5h1v1h-1zM18 5h1v1h-1zM20 5h1v1h-1zM15 6h1v1h-1zM17 6h1v1h-1zM19 6h1v1h-1zM16 7h1v1h-1zM18 7h1v1h-1zM17 8h1v1h-1zM19 8h1v1h-1zM21 8h1v1h-1zM18 9h1v1h-1zM20 9h1v1h-1zM19 10h1v1h-1z"/><path fill="#a2a26b" d="M21 3h1v1h-1zM20 4h1v1h-1zM22 4h1v1h-1zM20 6h1v1h-1zM22 6h1v1h-1zM21 7h1v1h-1zM20 8h1v1h-1zM22 8h1v1h-1z"/><path fill="#898ec2" d="M8 4h1v1h-1zM6 6h1v1h-1zM8 6h1v1h-1zM6 8h1v1h-1z"/><path fill="#b1b174" d="M16 4h1v1h-1zM18 4h1v1h-1zM16 6h1v1h-1zM18 6h1v1h-1zM16 8h1v1h-1zM18 8h1v1h-1z"/></svg><svg class="px" style="position:absolute;left:484px;top:79px;outline:1px solid #050505" width="62" height="62" viewBox="-2 -2 31 31"><rect x="-2" y="-2" width="31" height="31" fill="#9c9c98"/><path fill="#d2d2eb" d="M0 0h1v1h-1z"/><path fill="#3c3c62" d="M1 0h3v1h-3zM5 0h1v1h-1zM7 0h1v1h-1zM9 0h1v1h-1zM11 0h1v1h-1zM13 0h1v1h-1zM15 0h1v1h-1zM0 1h13v1h-13zM14 1h3v1h-3zM0 2h2v1h-2zM3 2h3v1h-3zM7 2h1v1h-1zM9 2h1v1h-1zM11 2h1v1h-1zM13 2h1v1h-1zM15 2h1v1h-1zM0 3h15v1h-15zM1 4h3v1h-3zM5 4h1v1h-1zM7 4h1v1h-1zM9 4h1v1h-1zM11 4h1v1h-1zM13 4h1v1h-1zM21 4h1v1h-1zM0 5h13v1h-13zM20 5h1v1h-1zM0 6h2v1h-2zM3 6h3v1h-3zM7 6h1v1h-1zM9 6h1v1h-1zM11 6h1v1h-1zM0 7h12v1h-12zM1 8h1v1h-1zM3 8h1v1h-1zM5 8h1v1h-1zM7 8h1v1h-1zM9 8h1v1h-1zM11 8h1v1h-1zM19 8h1v1h-1zM21 8h1v1h-1zM0 9h11v1h-11zM18 9h1v1h-1zM20 9h1v1h-1zM1 10h1v1h-1zM3 10h1v1h-1zM5 10h1v1h-1zM7 10h1v1h-1zM9 10h1v1h-1zM17 10h1v1h-1zM19 10h1v1h-1zM0 11h10v1h-10zM16 11h1v1h-1zM18 11h1v1h-1zM1 12h1v1h-1zM3 12h1v1h-1zM5 12h1v1h-1zM7 12h1v1h-1zM15 12h1v1h-1zM17 12h1v1h-1zM21 12h1v1h-1zM0 13h1v1h-1zM2 13h3v1h-3zM6 13h2v1h-2zM16 13h1v1h-1zM20 13h1v1h-1zM1 14h1v1h-1zM3 14h1v1h-1zM5 14h1v1h-1zM7 14h1v1h-1zM15 14h1v1h-1zM19 14h1v1h-1zM0 15h1v1h-1zM2 15h1v1h-1zM4 15h1v1h-1zM6 15h1v1h-1zM14 15h1v1h-1zM18 15h1v1h-1zM1 16h1v1h-1zM3 16h1v1h-1zM5 16h1v1h-1zM13 16h1v1h-1zM15 16h1v1h-1zM17 16h1v1h-1zM0 17h1v1h-1zM2 17h1v1h-1zM4 17h1v1h-1zM12 17h1v1h-1zM14 17h1v1h-1zM16 17h1v1h-1zM20 17h1v1h-1z"/><path fill="#c5c5dc" d="M4 0h1v1h-1zM6 0h1v1h-1zM2 2h1v1h-1zM6 2h1v1h-1zM0 4h1v1h-1zM4 4h1v1h-1zM6 4h1v1h-1zM2 6h1v1h-1z"/><path fill="#b8b8ce" d="M8 0h1v1h-1zM10 0h1v1h-1zM8 2h1v1h-1zM10 2h1v1h-1zM8 4h1v1h-1zM10 4h1v1h-1zM6 6h1v1h-1zM8 6h1v1h-1zM10 6h1v1h-1zM0 8h1v1h-1zM2 8h1v1h-1zM4 8h1v1h-1zM6 8h1v1h-1zM8 8h1v1h-1zM0 10h1v1h-1zM2 10h1v1h-1zM4 10h1v1h-1zM6 10h1v1h-1z"/><path fill="#ababbf" d="M12 0h1v1h-1zM14 0h1v1h-1zM12 2h1v1h-1zM14 2h1v1h-1zM12 4h1v1h-1zM14 4h1v1h-1zM12 6h1v1h-1zM10 8h1v1h-1zM8 10h1v1h-1zM0 12h1v1h-1zM2 12h1v1h-1zM4 12h1v1h-1zM6 12h1v1h-1zM8 12h1v1h-1zM0 14h1v1h-1zM2 14h1v1h-1zM4 14h1v1h-1zM6 14h1v1h-1z"/><path fill="#9e9eb1" d="M16 0h1v1h-1zM18 8h1v1h-1zM18 10h1v1h-1zM16 12h1v1h-1zM18 12h1v1h-1zM14 14h1v1h-1zM16 14h1v1h-1zM18 14h1v1h-1zM17 15h1v1h-1zM0 16h1v1h-1zM2 16h1v1h-1zM4 16h1v1h-1zM14 16h1v1h-1zM16 16h1v1h-1z"/><path fill="#5c4a1e" d="M17 0h1v1h-1zM19 0h1v1h-1zM21 0h1v1h-1zM18 1h1v1h-1zM20 1h1v1h-1zM17 2h1v1h-1zM19 2h1v1h-1zM16 3h1v1h-1zM18 3h1v1h-1zM15 4h1v1h-1zM17 4h1v1h-1zM19 4h1v1h-1zM14 5h3v1h-3zM18 5h1v1h-1zM13 6h1v1h-1zM15 6h1v1h-1zM17 6h1v1h-1zM19 6h1v1h-1zM12 7h3v1h-3zM16 7h1v1h-1zM18 7h1v1h-1zM13 8h1v1h-1zM15 8h1v1h-1zM17 8h1v1h-1zM11 9h2v1h-2zM14 9h3v1h-3zM11 10h1v1h-1zM13 10h1v1h-1zM15 10h1v1h-1zM10 11h1v1h-1zM12 11h1v1h-1zM14 11h1v1h-1zM9 12h1v1h-1zM11 12h1v1h-1zM13 12h1v1h-1zM8 13h1v1h-1zM10 13h3v1h-3zM14 13h1v1h-1zM9 14h1v1h-1zM11 14h1v1h-1zM13 14h1v1h-1zM8 15h1v1h-1zM10 15h1v1h-1zM12 15h1v1h-1zM7 16h1v1h-1zM9 16h1v1h-1zM11 16h1v1h-1zM6 17h1v1h-1zM8 17h1v1h-1zM10 17h1v1h-1z"/><path fill="#a69461" d="M18 0h1v1h-1zM16 2h1v1h-1zM18 2h1v1h-1zM16 4h1v1h-1zM18 4h1v1h-1zM16 6h1v1h-1zM18 6h1v1h-1zM16 8h1v1h-1zM16 10h1v1h-1zM14 12h1v1h-1zM12 14h1v1h-1zM6 16h1v1h-1zM8 16h1v1h-1zM10 16h1v1h-1zM12 16h1v1h-1z"/><path fill="#998859" d="M20 0h1v1h-1zM22 0h1v1h-1zM20 2h1v1h-1zM21 3h1v1h-1zM20 4h1v1h-1z"/><path fill="#040404" d="M23 0h1v1h-1zM25 0h1v1h-1zM13 1h1v1h-1zM17 1h1v1h-1zM19 1h1v1h-1zM21 1h2v1h-2zM24 1h1v1h-1zM26 1h1v1h-1zM21 2h1v1h-1zM23 2h1v1h-1zM25 2h1v1h-1zM15 3h1v1h-1zM17 3h1v1h-1zM19 3h2v1h-2zM22 3h1v1h-1zM24 3h1v1h-1zM26 3h1v1h-1zM23 4h1v1h-1zM25 4h1v1h-1zM13 5h1v1h-1zM17 5h1v1h-1zM19 5h1v1h-1zM21 5h2v1h-2zM24 5h1v1h-1zM26 5h1v1h-1zM21 6h1v1h-1zM23 6h1v1h-1zM25 6h1v1h-1zM15 7h1v1h-1zM17 7h1v1h-1zM19 7h2v1h-2zM22 7h1v1h-1zM24 7h1v1h-1zM26 7h1v1h-1zM23 8h1v1h-1zM25 8h1v1h-1zM13 9h1v1h-1zM17 9h1v1h-1zM19 9h1v1h-1zM21 9h2v1h-2zM24 9h1v1h-1zM26 9h1v1h-1zM21 10h1v1h-1zM23 10h1v1h-1zM25 10h1v1h-1zM11 11h1v1h-1zM13 11h1v1h-1zM15 11h1v1h-1zM17 11h1v1h-1zM19 11h2v1h-2zM22 11h1v1h-1zM24 11h1v1h-1zM26 11h1v1h-1zM19 12h1v1h-1zM23 12h1v1h-1zM25 12h1v1h-1zM1 13h1v1h-1zM5 13h1v1h-1zM9 13h1v1h-1zM13 13h1v1h-1zM15 13h1v1h-1zM17 13h2v1h-2zM21 13h2v1h-2zM24 13h1v1h-1zM26 13h1v1h-1zM17 14h1v1h-1zM21 14h1v1h-1zM23 14h1v1h-1zM25 14h1v1h-1zM1 15h1v1h-1zM3 15h1v1h-1zM5 15h1v1h-1zM7 15h1v1h-1zM9 15h1v1h-1zM11 15h1v1h-1zM13 15h1v1h-1zM15 15h2v1h-2zM20 15h1v1h-1zM22 15h1v1h-1zM24 15h1v1h-1zM26 15h1v1h-1zM19 16h1v1h-1zM21 16h1v1h-1zM23 16h1v1h-1zM25 16h1v1h-1zM1 17h1v1h-1zM3 17h1v1h-1zM5 17h1v1h-1zM7 17h1v1h-1zM9 17h1v1h-1zM11 17h1v1h-1zM13 17h1v1h-1zM15 17h1v1h-1zM17 17h2v1h-2zM22 17h1v1h-1zM24 17h1v1h-1zM26 17h1v1h-1zM1 18h1v1h-1zM5 18h1v1h-1zM9 18h1v1h-1zM13 18h1v1h-1zM15 18h1v1h-1zM17 18h1v1h-1zM19 18h1v1h-1zM21 18h1v1h-1zM23 18h1v1h-1zM25 18h1v1h-1zM0 19h1v1h-1zM3 19h2v1h-2zM7 19h2v1h-2zM11 19h2v1h-2zM14 19h1v1h-1zM16 19h1v1h-1zM18 19h1v1h-1zM20 19h1v1h-1zM22 19h1v1h-1zM24 19h1v1h-1zM26 19h1v1h-1zM3 20h1v1h-1zM7 20h1v1h-1zM11 20h1v1h-1zM15 20h1v1h-1zM17 20h1v1h-1zM19 20h1v1h-1zM21 20h1v1h-1zM23 20h1v1h-1zM25 20h1v1h-1zM0 21h1v1h-1zM2 21h1v1h-1zM5 21h2v1h-2zM8 21h1v1h-1zM10 21h1v1h-1zM12 21h1v1h-1zM14 21h1v1h-1zM16 21h1v1h-1zM18 21h1v1h-1zM20 21h1v1h-1zM22 21h1v1h-1zM24 21h1v1h-1zM26 21h1v1h-1zM1 22h1v1h-1zM3 22h1v1h-1zM5 22h1v1h-1zM7 22h1v1h-1zM9 22h1v1h-1zM11 22h1v1h-1zM13 22h1v1h-1zM15 22h1v1h-1zM17 22h1v1h-1zM19 22h1v1h-1zM21 22h1v1h-1zM23 22h1v1h-1zM25 22h1v1h-1zM0 23h1v1h-1zM2 23h1v1h-1zM4 23h1v1h-1zM6 23h1v1h-1zM8 23h1v1h-1zM10 23h1v1h-1zM12 23h1v1h-1zM14 23h1v1h-1zM16 23h1v1h-1zM18 23h1v1h-1zM20 23h1v1h-1zM22 23h1v1h-1zM24 23h1v1h-1zM26 23h1v1h-1zM1 24h1v1h-1zM3 24h1v1h-1zM5 24h1v1h-1zM7 24h1v1h-1zM9 24h1v1h-1zM11 24h1v1h-1zM13 24h1v1h-1zM15 24h1v1h-1zM17 24h1v1h-1zM19 24h1v1h-1zM21 24h1v1h-1zM23 24h1v1h-1zM25 24h1v1h-1zM0 25h1v1h-1zM2 25h1v1h-1zM4 25h1v1h-1zM6 25h1v1h-1zM8 25h1v1h-1zM10 25h1v1h-1zM12 25h1v1h-1zM14 25h1v1h-1zM16 25h1v1h-1zM18 25h1v1h-1zM20 25h1v1h-1zM22 25h1v1h-1zM24 25h1v1h-1zM26 25h1v1h-1zM1 26h1v1h-1zM3 26h1v1h-1zM5 26h1v1h-1zM7 26h1v1h-1zM9 26h1v1h-1zM11 26h1v1h-1zM13 26h1v1h-1zM15 26h1v1h-1zM17 26h1v1h-1zM19 26h1v1h-1zM21 26h1v1h-1zM23 26h1v1h-1zM25 26h1v1h-1z"/><path fill="#848494" d="M24 0h1v1h-1zM26 0h1v1h-1zM25 1h1v1h-1zM24 2h1v1h-1zM26 2h1v1h-1zM25 3h1v1h-1zM24 4h1v1h-1zM26 4h1v1h-1zM25 5h1v1h-1zM24 6h1v1h-1zM26 6h1v1h-1zM25 7h1v1h-1zM24 8h1v1h-1zM26 8h1v1h-1zM25 9h1v1h-1zM24 10h1v1h-1zM26 10h1v1h-1zM25 11h1v1h-1zM24 12h1v1h-1zM26 12h1v1h-1zM25 13h1v1h-1zM24 14h1v1h-1zM26 14h1v1h-1zM23 15h1v1h-1zM25 15h1v1h-1zM24 16h1v1h-1zM26 16h1v1h-1zM23 17h1v1h-1zM25 17h1v1h-1z"/><path fill="#9191a2" d="M23 1h1v1h-1zM22 2h1v1h-1zM23 3h1v1h-1zM22 4h1v1h-1zM23 5h1v1h-1zM20 6h1v1h-1zM22 6h1v1h-1zM21 7h1v1h-1zM23 7h1v1h-1zM20 8h1v1h-1zM22 8h1v1h-1zM23 9h1v1h-1zM20 10h1v1h-1zM22 10h1v1h-1zM21 11h1v1h-1zM23 11h1v1h-1zM20 12h1v1h-1zM22 12h1v1h-1zM19 13h1v1h-1zM23 13h1v1h-1zM20 14h1v1h-1zM22 14h1v1h-1zM19 15h1v1h-1zM21 15h1v1h-1zM18 16h1v1h-1zM20 16h1v1h-1zM22 16h1v1h-1zM19 17h1v1h-1zM21 17h1v1h-1z"/><path fill="#b4a069" d="M14 6h1v1h-1zM12 8h1v1h-1zM14 8h1v1h-1zM10 10h1v1h-1zM12 10h1v1h-1zM14 10h1v1h-1zM10 12h1v1h-1zM12 12h1v1h-1zM8 14h1v1h-1zM10 14h1v1h-1z"/><path fill="#888077" d="M0 18h1v1h-1zM2 18h1v1h-1zM4 18h1v1h-1zM6 18h1v1h-1zM8 18h1v1h-1z"/><path fill="#180e0a" d="M3 18h1v1h-1zM7 18h1v1h-1zM11 18h1v1h-1zM2 19h1v1h-1zM6 19h1v1h-1zM10 19h1v1h-1zM1 20h1v1h-1zM5 20h1v1h-1zM9 20h1v1h-1zM13 20h1v1h-1zM4 21h1v1h-1z"/><path fill="#7d756e" d="M10 18h1v1h-1zM12 18h1v1h-1zM14 18h1v1h-1zM16 18h1v1h-1zM18 18h1v1h-1zM1 19h1v1h-1zM5 19h1v1h-1zM9 19h1v1h-1zM13 19h1v1h-1zM15 19h1v1h-1zM17 19h1v1h-1zM0 20h1v1h-1zM2 20h1v1h-1zM4 20h1v1h-1zM6 20h1v1h-1zM8 20h1v1h-1zM10 20h1v1h-1zM12 20h1v1h-1zM14 20h1v1h-1zM16 20h1v1h-1zM1 21h1v1h-1zM3 21h1v1h-1zM7 21h1v1h-1zM9 21h1v1h-1zM11 21h1v1h-1zM13 21h1v1h-1zM15 21h1v1h-1zM0 22h1v1h-1zM2 22h1v1h-1zM4 22h1v1h-1zM6 22h1v1h-1zM8 22h1v1h-1zM10 22h1v1h-1zM12 22h1v1h-1z"/><path fill="#726b64" d="M20 18h1v1h-1zM22 18h1v1h-1zM24 18h1v1h-1zM26 18h1v1h-1zM19 19h1v1h-1zM21 19h1v1h-1zM23 19h1v1h-1zM25 19h1v1h-1zM18 20h1v1h-1zM20 20h1v1h-1zM22 20h1v1h-1zM24 20h1v1h-1zM26 20h1v1h-1zM17 21h1v1h-1zM19 21h1v1h-1zM21 21h1v1h-1zM23 21h1v1h-1zM25 21h1v1h-1zM14 22h1v1h-1zM16 22h1v1h-1zM18 22h1v1h-1zM20 22h1v1h-1zM22 22h1v1h-1zM24 22h1v1h-1zM26 22h1v1h-1zM1 23h1v1h-1zM3 23h1v1h-1zM5 23h1v1h-1zM7 23h1v1h-1zM9 23h1v1h-1zM11 23h1v1h-1zM13 23h1v1h-1zM15 23h1v1h-1zM17 23h1v1h-1zM19 23h1v1h-1zM21 23h1v1h-1zM23 23h1v1h-1zM25 23h1v1h-1zM0 24h1v1h-1zM2 24h1v1h-1zM4 24h1v1h-1zM6 24h1v1h-1zM8 24h1v1h-1zM10 24h1v1h-1zM12 24h1v1h-1zM14 24h1v1h-1zM16 24h1v1h-1zM18 24h1v1h-1zM20 24h1v1h-1zM22 24h1v1h-1zM24 24h1v1h-1zM26 24h1v1h-1zM1 25h1v1h-1zM3 25h1v1h-1zM5 25h1v1h-1zM7 25h1v1h-1zM9 25h1v1h-1zM11 25h1v1h-1zM13 25h1v1h-1zM15 25h1v1h-1zM17 25h1v1h-1zM19 25h1v1h-1zM21 25h1v1h-1zM23 25h1v1h-1zM25 25h1v1h-1zM0 26h1v1h-1zM2 26h1v1h-1zM4 26h1v1h-1zM6 26h1v1h-1zM8 26h1v1h-1zM10 26h1v1h-1zM12 26h1v1h-1zM14 26h1v1h-1zM16 26h1v1h-1zM18 26h1v1h-1zM20 26h1v1h-1zM22 26h1v1h-1zM24 26h1v1h-1zM26 26h1v1h-1z"/></svg><svg class="px" style="position:absolute;left:54px;top:173px;outline:1px solid #050505" width="62" height="62" viewBox="-2 -2 31 31"><rect x="-2" y="-2" width="31" height="31" fill="#9c9c98"/><path fill="#bfebeb" d="M0 0h1v1h-1z"/><path fill="#2e565a" d="M1 0h3v1h-3zM5 0h1v1h-1zM7 0h1v1h-1zM9 0h1v1h-1zM11 0h1v1h-1zM13 0h1v1h-1zM15 0h1v1h-1zM17 0h1v1h-1zM19 0h1v1h-1zM21 0h1v1h-1zM0 1h13v1h-13zM14 1h3v1h-3zM18 1h1v1h-1zM20 1h1v1h-1zM0 2h2v1h-2zM3 2h3v1h-3zM7 2h1v1h-1zM9 2h1v1h-1zM11 2h1v1h-1zM13 2h1v1h-1zM15 2h1v1h-1zM17 2h1v1h-1zM19 2h1v1h-1zM0 3h15v1h-15zM16 3h1v1h-1zM18 3h1v1h-1zM1 4h3v1h-3zM5 4h1v1h-1zM7 4h1v1h-1zM9 4h1v1h-1zM11 4h1v1h-1zM13 4h1v1h-1zM15 4h1v1h-1zM17 4h1v1h-1zM19 4h1v1h-1zM21 4h1v1h-1zM0 5h13v1h-13zM14 5h3v1h-3zM18 5h1v1h-1zM20 5h1v1h-1zM0 6h2v1h-2zM3 6h3v1h-3zM7 6h1v1h-1zM9 6h1v1h-1zM11 6h1v1h-1zM13 6h1v1h-1zM15 6h1v1h-1zM17 6h1v1h-1zM19 6h1v1h-1zM0 7h15v1h-15zM16 7h1v1h-1zM18 7h1v1h-1zM1 8h1v1h-1zM3 8h1v1h-1zM5 8h1v1h-1zM7 8h1v1h-1zM9 8h1v1h-1zM11 8h1v1h-1zM13 8h1v1h-1zM15 8h1v1h-1zM17 8h1v1h-1zM19 8h1v1h-1zM21 8h1v1h-1z"/><path fill="#b4dcdc" d="M4 0h1v1h-1zM6 0h1v1h-1zM2 2h1v1h-1zM6 2h1v1h-1zM0 4h1v1h-1zM4 4h1v1h-1zM6 4h1v1h-1zM2 6h1v1h-1z"/><path fill="#a8cece" d="M8 0h1v1h-1zM10 0h1v1h-1zM8 2h1v1h-1zM10 2h1v1h-1zM8 4h1v1h-1zM10 4h1v1h-1zM6 6h1v1h-1zM8 6h1v1h-1zM10 6h1v1h-1zM0 8h1v1h-1zM2 8h1v1h-1zM4 8h1v1h-1zM6 8h1v1h-1zM8 8h1v1h-1z"/><path fill="#9cbfbf" d="M12 0h1v1h-1zM14 0h1v1h-1zM12 2h1v1h-1zM14 2h1v1h-1zM12 4h1v1h-1zM14 4h1v1h-1zM12 6h1v1h-1zM14 6h1v1h-1zM10 8h1v1h-1zM12 8h1v1h-1zM14 8h1v1h-1z"/><path fill="#90b1b1" d="M16 0h1v1h-1zM18 0h1v1h-1zM16 2h1v1h-1zM18 2h1v1h-1zM16 4h1v1h-1zM18 4h1v1h-1zM16 6h1v1h-1zM18 6h1v1h-1zM16 8h1v1h-1zM18 8h1v1h-1z"/><path fill="#84a2a2" d="M20 0h1v1h-1zM22 0h1v1h-1zM23 1h1v1h-1zM20 2h1v1h-1zM22 2h1v1h-1zM21 3h1v1h-1zM23 3h1v1h-1zM20 4h1v1h-1zM22 4h1v1h-1zM23 5h1v1h-1zM20 6h1v1h-1zM22 6h1v1h-1zM21 7h1v1h-1zM23 7h1v1h-1zM20 8h1v1h-1zM22 8h1v1h-1z"/><path fill="#040404" d="M23 0h1v1h-1zM25 0h1v1h-1zM13 1h1v1h-1zM17 1h1v1h-1zM19 1h1v1h-1zM21 1h2v1h-2zM24 1h1v1h-1zM26 1h1v1h-1zM21 2h1v1h-1zM23 2h1v1h-1zM25 2h1v1h-1zM15 3h1v1h-1zM17 3h1v1h-1zM19 3h2v1h-2zM22 3h1v1h-1zM24 3h1v1h-1zM26 3h1v1h-1zM23 4h1v1h-1zM25 4h1v1h-1zM13 5h1v1h-1zM17 5h1v1h-1zM19 5h1v1h-1zM21 5h2v1h-2zM24 5h1v1h-1zM26 5h1v1h-1zM21 6h1v1h-1zM23 6h1v1h-1zM25 6h1v1h-1zM15 7h1v1h-1zM17 7h1v1h-1zM19 7h2v1h-2zM22 7h1v1h-1zM24 7h1v1h-1zM26 7h1v1h-1zM23 8h1v1h-1zM25 8h1v1h-1zM13 9h1v1h-1zM15 9h1v1h-1zM17 9h2v1h-2zM20 9h1v1h-1zM22 9h1v1h-1zM24 9h1v1h-1zM26 9h1v1h-1zM17 10h1v1h-1zM21 10h1v1h-1zM23 10h1v1h-1zM25 10h1v1h-1zM3 11h1v1h-1zM7 11h1v1h-1zM11 11h1v1h-1zM13 11h1v1h-1zM15 11h2v1h-2zM20 11h1v1h-1zM22 11h1v1h-1zM24 11h1v1h-1zM26 11h1v1h-1zM19 12h1v1h-1zM21 12h1v1h-1zM23 12h1v1h-1zM25 12h1v1h-1zM1 13h1v1h-1zM5 13h1v1h-1zM9 13h1v1h-1zM11 13h1v1h-1zM13 13h1v1h-1zM15 13h1v1h-1zM17 13h2v1h-2zM20 13h1v1h-1zM22 13h1v1h-1zM24 13h1v1h-1zM26 13h1v1h-1zM17 14h1v1h-1zM19 14h1v1h-1zM21 14h1v1h-1zM23 14h1v1h-1zM25 14h1v1h-1zM1 15h1v1h-1zM3 15h1v1h-1zM5 15h1v1h-1zM7 15h1v1h-1zM9 15h1v1h-1zM11 15h2v1h-2zM15 15h2v1h-2zM18 15h1v1h-1zM20 15h1v1h-1zM22 15h1v1h-1zM24 15h1v1h-1zM26 15h1v1h-1zM15 16h1v1h-1zM19 16h1v1h-1zM21 16h1v1h-1zM23 16h1v1h-1zM25 16h1v1h-1zM1 17h1v1h-1zM3 17h1v1h-1zM5 17h1v1h-1zM7 17h1v1h-1zM9 17h1v1h-1zM11 17h1v1h-1zM13 17h2v1h-2zM17 17h2v1h-2zM20 17h1v1h-1zM22 17h1v1h-1zM24 17h1v1h-1zM26 17h1v1h-1zM1 18h1v1h-1zM5 18h1v1h-1zM9 18h1v1h-1zM13 18h1v1h-1zM15 18h1v1h-1zM17 18h1v1h-1zM19 18h1v1h-1zM21 18h1v1h-1zM23 18h1v1h-1zM25 18h1v1h-1zM0 19h1v1h-1zM3 19h2v1h-2zM6 19h1v1h-1zM8 19h1v1h-1zM12 19h1v1h-1zM14 19h1v1h-1zM16 19h1v1h-1zM18 19h1v1h-1zM20 19h1v1h-1zM22 19h1v1h-1zM24 19h1v1h-1zM26 19h1v1h-1zM1 20h1v1h-1zM3 20h1v1h-1zM7 20h1v1h-1zM9 20h1v1h-1zM11 20h1v1h-1zM13 20h1v1h-1zM15 20h1v1h-1zM17 20h1v1h-1zM19 20h1v1h-1zM21 20h1v1h-1zM23 20h1v1h-1zM25 20h1v1h-1zM0 21h1v1h-1zM2 21h1v1h-1zM4 21h1v1h-1zM6 21h1v1h-1zM8 21h1v1h-1zM10 21h1v1h-1zM12 21h1v1h-1zM14 21h1v1h-1zM16 21h1v1h-1zM18 21h1v1h-1zM20 21h1v1h-1zM22 21h1v1h-1zM24 21h1v1h-1zM26 21h1v1h-1zM1 22h1v1h-1zM3 22h1v1h-1zM5 22h1v1h-1zM7 22h1v1h-1zM9 22h1v1h-1zM11 22h1v1h-1zM13 22h1v1h-1zM15 22h1v1h-1zM17 22h1v1h-1zM19 22h1v1h-1zM21 22h1v1h-1zM23 22h1v1h-1zM25 22h1v1h-1zM0 23h1v1h-1zM2 23h1v1h-1zM4 23h1v1h-1zM6 23h1v1h-1zM8 23h1v1h-1zM10 23h1v1h-1zM12 23h1v1h-1zM14 23h1v1h-1zM16 23h1v1h-1zM18 23h1v1h-1zM20 23h1v1h-1zM22 23h1v1h-1zM24 23h1v1h-1zM26 23h1v1h-1zM1 24h1v1h-1zM3 24h1v1h-1zM5 24h1v1h-1zM7 24h1v1h-1zM9 24h1v1h-1zM11 24h1v1h-1zM13 24h1v1h-1zM15 24h1v1h-1zM17 24h1v1h-1zM19 24h1v1h-1zM21 24h1v1h-1zM23 24h1v1h-1zM25 24h1v1h-1zM0 25h1v1h-1zM2 25h1v1h-1zM4 25h1v1h-1zM6 25h1v1h-1zM8 25h1v1h-1zM10 25h1v1h-1zM12 25h1v1h-1zM14 25h1v1h-1zM16 25h1v1h-1zM18 25h1v1h-1zM20 25h1v1h-1zM22 25h1v1h-1zM24 25h1v1h-1zM26 25h1v1h-1zM1 26h1v1h-1zM3 26h1v1h-1zM5 26h1v1h-1zM7 26h1v1h-1zM9 26h1v1h-1zM11 26h1v1h-1zM13 26h1v1h-1zM15 26h1v1h-1zM17 26h1v1h-1zM19 26h1v1h-1zM21 26h1v1h-1zM23 26h1v1h-1zM25 26h1v1h-1z"/><path fill="#799494" d="M24 0h1v1h-1zM26 0h1v1h-1zM25 1h1v1h-1zM24 2h1v1h-1zM26 2h1v1h-1zM25 3h1v1h-1zM24 4h1v1h-1zM26 4h1v1h-1zM25 5h1v1h-1zM24 6h1v1h-1zM26 6h1v1h-1zM25 7h1v1h-1zM24 8h1v1h-1zM26 8h1v1h-1z"/><path fill="#080808" d="M0 9h6v1h-6zM11 9h2v1h-2zM14 9h1v1h-1zM16 9h1v1h-1zM1 10h1v1h-1zM3 10h1v1h-1zM13 10h1v1h-1zM15 10h1v1h-1zM19 10h1v1h-1zM0 11h3v1h-3zM4 11h1v1h-1zM12 11h1v1h-1zM14 11h1v1h-1zM18 11h1v1h-1zM1 12h1v1h-1zM3 12h1v1h-1zM13 12h1v1h-1zM0 13h1v1h-1zM2 13h3v1h-3zM12 13h1v1h-1zM1 14h1v1h-1zM3 14h1v1h-1zM13 14h1v1h-1zM0 15h1v1h-1zM2 15h1v1h-1zM4 15h1v1h-1zM1 16h1v1h-1zM3 16h1v1h-1zM5 16h1v1h-1zM7 16h1v1h-1zM9 16h1v1h-1zM11 16h1v1h-1zM13 16h1v1h-1zM0 17h1v1h-1zM2 17h1v1h-1zM4 17h1v1h-1zM6 17h1v1h-1zM8 17h1v1h-1zM10 17h1v1h-1zM12 17h1v1h-1zM3 18h1v1h-1zM7 18h1v1h-1zM11 18h1v1h-1zM2 19h1v1h-1zM10 19h1v1h-1zM5 20h1v1h-1z"/><path fill="#4e2882" d="M6 9h5v1h-5zM5 10h1v1h-1zM7 10h1v1h-1zM9 10h1v1h-1zM11 10h1v1h-1zM5 11h2v1h-2zM8 11h3v1h-3zM5 12h1v1h-1zM7 12h1v1h-1zM9 12h1v1h-1zM11 12h1v1h-1zM6 13h3v1h-3zM10 13h1v1h-1zM5 14h1v1h-1zM7 14h1v1h-1zM9 14h1v1h-1zM11 14h1v1h-1zM6 15h1v1h-1zM8 15h1v1h-1zM10 15h1v1h-1z"/><path fill="#929292" d="M19 9h1v1h-1zM21 9h1v1h-1zM18 10h1v1h-1zM20 10h1v1h-1zM19 11h1v1h-1zM21 11h1v1h-1zM20 12h1v1h-1zM21 13h1v1h-1zM0 18h1v1h-1zM2 18h1v1h-1zM4 18h1v1h-1zM6 18h1v1h-1zM8 18h1v1h-1zM10 18h1v1h-1zM12 18h1v1h-1zM14 18h1v1h-1zM1 19h1v1h-1zM5 19h1v1h-1zM7 19h1v1h-1zM9 19h1v1h-1zM11 19h1v1h-1zM13 19h1v1h-1zM15 19h1v1h-1zM0 20h1v1h-1zM2 20h1v1h-1zM4 20h1v1h-1zM6 20h1v1h-1zM8 20h1v1h-1zM10 20h1v1h-1zM12 20h1v1h-1zM14 20h1v1h-1zM1 21h1v1h-1zM3 21h1v1h-1zM5 21h1v1h-1zM7 21h1v1h-1zM9 21h1v1h-1zM11 21h1v1h-1zM13 21h1v1h-1z"/><path fill="#858585" d="M23 9h1v1h-1zM25 9h1v1h-1zM22 10h1v1h-1zM24 10h1v1h-1zM26 10h1v1h-1zM23 11h1v1h-1zM25 11h1v1h-1zM22 12h1v1h-1zM24 12h1v1h-1zM26 12h1v1h-1zM23 13h1v1h-1zM25 13h1v1h-1zM22 14h1v1h-1zM24 14h1v1h-1zM26 14h1v1h-1zM23 15h1v1h-1zM25 15h1v1h-1zM22 16h1v1h-1zM24 16h1v1h-1zM26 16h1v1h-1zM21 17h1v1h-1zM23 17h1v1h-1zM25 17h1v1h-1zM20 18h1v1h-1zM22 18h1v1h-1zM24 18h1v1h-1zM26 18h1v1h-1zM19 19h1v1h-1zM21 19h1v1h-1zM23 19h1v1h-1zM25 19h1v1h-1zM16 20h1v1h-1zM18 20h1v1h-1zM20 20h1v1h-1zM22 20h1v1h-1zM24 20h1v1h-1zM26 20h1v1h-1zM15 21h1v1h-1zM17 21h1v1h-1zM19 21h1v1h-1zM21 21h1v1h-1zM23 21h1v1h-1zM25 21h1v1h-1zM0 22h1v1h-1zM2 22h1v1h-1zM4 22h1v1h-1zM6 22h1v1h-1zM8 22h1v1h-1zM10 22h1v1h-1zM12 22h1v1h-1zM14 22h1v1h-1zM16 22h1v1h-1zM18 22h1v1h-1zM20 22h1v1h-1zM22 22h1v1h-1zM24 22h1v1h-1zM26 22h1v1h-1zM1 23h1v1h-1zM3 23h1v1h-1zM5 23h1v1h-1zM7 23h1v1h-1zM9 23h1v1h-1zM11 23h1v1h-1zM13 23h1v1h-1zM15 23h1v1h-1zM17 23h1v1h-1zM19 23h1v1h-1zM21 23h1v1h-1zM23 23h1v1h-1zM25 23h1v1h-1zM0 24h1v1h-1zM2 24h1v1h-1zM4 24h1v1h-1zM6 24h1v1h-1zM8 24h1v1h-1zM10 24h1v1h-1zM12 24h1v1h-1zM14 24h1v1h-1zM16 24h1v1h-1zM18 24h1v1h-1zM20 24h1v1h-1zM22 24h1v1h-1zM24 24h1v1h-1zM26 24h1v1h-1zM1 25h1v1h-1zM3 25h1v1h-1zM5 25h1v1h-1zM7 25h1v1h-1zM9 25h1v1h-1zM11 25h1v1h-1zM13 25h1v1h-1zM15 25h1v1h-1zM17 25h1v1h-1zM19 25h1v1h-1zM21 25h1v1h-1zM23 25h1v1h-1zM25 25h1v1h-1zM0 26h1v1h-1zM2 26h1v1h-1zM4 26h1v1h-1zM6 26h1v1h-1zM8 26h1v1h-1zM10 26h1v1h-1zM12 26h1v1h-1zM14 26h1v1h-1zM16 26h1v1h-1zM18 26h1v1h-1zM20 26h1v1h-1zM22 26h1v1h-1zM24 26h1v1h-1zM26 26h1v1h-1z"/><path fill="#acacac" d="M0 10h1v1h-1zM2 10h1v1h-1zM4 10h1v1h-1zM0 12h1v1h-1zM2 12h1v1h-1z"/><path fill="#aa87bf" d="M6 10h1v1h-1zM8 10h1v1h-1zM10 10h1v1h-1zM4 12h1v1h-1zM6 12h1v1h-1zM8 12h1v1h-1z"/><path fill="#9f9f9f" d="M12 10h1v1h-1zM14 10h1v1h-1zM16 10h1v1h-1zM14 12h1v1h-1zM0 14h1v1h-1zM2 14h1v1h-1zM4 14h1v1h-1zM12 14h1v1h-1zM0 16h1v1h-1zM2 16h1v1h-1zM4 16h1v1h-1zM6 16h1v1h-1zM10 16h1v1h-1zM12 16h1v1h-1z"/><path fill="#a27099" d="M17 11h1v1h-1zM18 12h1v1h-1zM19 13h1v1h-1zM16 14h1v1h-1zM18 14h1v1h-1zM20 14h1v1h-1zM17 15h1v1h-1zM19 15h1v1h-1zM14 16h1v1h-1zM16 16h1v1h-1zM18 16h1v1h-1zM15 17h1v1h-1zM19 17h1v1h-1zM16 18h1v1h-1zM18 18h1v1h-1zM17 19h1v1h-1z"/><path fill="#9d7db1" d="M10 12h1v1h-1zM12 12h1v1h-1zM6 14h1v1h-1zM8 14h1v1h-1zM10 14h1v1h-1zM8 16h1v1h-1z"/><path fill="#701c70" d="M15 12h1v1h-1zM17 12h1v1h-1zM14 13h1v1h-1zM16 13h1v1h-1zM15 14h1v1h-1zM14 15h1v1h-1zM17 16h1v1h-1zM16 17h1v1h-1z"/><path fill="#b17aa6" d="M16 12h1v1h-1zM14 14h1v1h-1zM13 15h1v1h-1z"/><path fill="#94668b" d="M21 15h1v1h-1zM20 16h1v1h-1z"/></svg><svg class="px" style="position:absolute;left:140px;top:173px;outline:1px solid #050505" width="62" height="62" viewBox="-2 -2 31 31"><rect x="-2" y="-2" width="31" height="31" fill="#9c9c98"/><path fill="#b8ddb1" d="M0 0h1v1h-1z"/><path fill="#143010" d="M1 0h3v1h-3zM5 0h1v1h-1zM7 0h1v1h-1zM9 0h1v1h-1zM11 0h1v1h-1zM13 0h1v1h-1zM15 0h1v1h-1zM17 0h1v1h-1zM19 0h1v1h-1zM21 0h1v1h-1zM0 1h13v1h-13zM14 1h1v1h-1zM16 1h1v1h-1zM18 1h1v1h-1zM20 1h1v1h-1zM0 2h2v1h-2zM3 2h3v1h-3zM7 2h1v1h-1zM9 2h1v1h-1zM11 2h1v1h-1zM13 2h1v1h-1zM15 2h1v1h-1zM17 2h1v1h-1zM19 2h1v1h-1zM0 3h11v1h-11zM12 3h3v1h-3zM16 3h1v1h-1zM18 3h1v1h-1zM1 4h1v1h-1zM11 4h1v1h-1zM13 4h1v1h-1zM15 4h1v1h-1zM17 4h1v1h-1zM21 4h1v1h-1zM0 5h4v1h-4zM11 5h2v1h-2zM14 5h1v1h-1zM16 5h1v1h-1zM18 5h1v1h-1zM20 5h1v1h-1zM1 6h1v1h-1zM3 6h1v1h-1zM11 6h1v1h-1zM13 6h1v1h-1zM15 6h1v1h-1zM19 6h1v1h-1zM0 7h5v1h-5zM12 7h3v1h-3zM16 7h1v1h-1zM18 7h1v1h-1zM1 8h1v1h-1zM3 8h1v1h-1zM13 8h1v1h-1zM15 8h1v1h-1zM17 8h1v1h-1zM19 8h1v1h-1zM21 8h1v1h-1zM0 9h6v1h-6zM14 9h1v1h-1zM16 9h1v1h-1zM18 9h1v1h-1zM20 9h1v1h-1zM1 10h1v1h-1zM3 10h1v1h-1zM5 10h1v1h-1zM15 10h1v1h-1zM17 10h1v1h-1zM19 10h1v1h-1zM0 11h3v1h-3zM4 11h3v1h-3zM14 11h1v1h-1zM16 11h1v1h-1zM18 11h1v1h-1zM1 12h1v1h-1zM3 12h1v1h-1zM5 12h1v1h-1zM7 12h1v1h-1zM15 12h1v1h-1zM17 12h1v1h-1zM21 12h1v1h-1zM0 13h1v1h-1zM2 13h3v1h-3zM6 13h2v1h-2zM16 13h1v1h-1zM20 13h1v1h-1zM1 14h1v1h-1zM3 14h1v1h-1zM5 14h1v1h-1zM7 14h1v1h-1zM0 15h1v1h-1zM2 15h1v1h-1zM4 15h1v1h-1zM6 15h1v1h-1zM8 15h1v1h-1zM1 16h1v1h-1zM3 16h1v1h-1zM5 16h1v1h-1zM7 16h1v1h-1zM9 16h1v1h-1zM17 16h1v1h-1zM0 17h1v1h-1zM2 17h1v1h-1zM4 17h1v1h-1zM6 17h1v1h-1zM8 17h1v1h-1zM10 17h1v1h-1zM3 18h1v1h-1zM7 18h1v1h-1zM2 19h1v1h-1zM6 19h1v1h-1zM10 19h1v1h-1zM1 20h1v1h-1zM5 20h1v1h-1zM9 20h1v1h-1zM0 21h1v1h-1zM4 21h1v1h-1zM12 21h1v1h-1z"/><path fill="#adcfa6" d="M4 0h1v1h-1zM2 2h1v1h-1zM0 4h1v1h-1zM2 4h1v1h-1z"/><path fill="#a1c29b" d="M6 0h1v1h-1zM8 0h1v1h-1zM10 0h1v1h-1zM6 2h1v1h-1zM8 2h1v1h-1zM10 2h1v1h-1zM0 6h1v1h-1zM2 6h1v1h-1zM0 8h1v1h-1zM2 8h1v1h-1zM4 8h1v1h-1zM0 10h1v1h-1zM2 10h1v1h-1z"/><path fill="#96b490" d="M12 0h1v1h-1zM14 0h1v1h-1zM12 2h1v1h-1zM14 2h1v1h-1zM10 4h1v1h-1zM12 4h1v1h-1zM14 4h1v1h-1zM12 6h1v1h-1zM14 6h1v1h-1zM12 8h1v1h-1zM14 8h1v1h-1zM4 10h1v1h-1zM6 10h1v1h-1zM0 12h1v1h-1zM2 12h1v1h-1zM4 12h1v1h-1zM6 12h1v1h-1zM0 14h1v1h-1zM2 14h1v1h-1zM4 14h1v1h-1zM6 14h1v1h-1zM8 14h1v1h-1z"/><path fill="#8ba685" d="M16 0h1v1h-1zM18 0h1v1h-1zM16 2h1v1h-1zM18 2h1v1h-1zM16 4h1v1h-1zM18 4h1v1h-1zM16 6h1v1h-1zM18 6h1v1h-1zM17 7h1v1h-1zM16 8h1v1h-1zM18 8h1v1h-1zM14 10h1v1h-1zM16 10h1v1h-1zM18 10h1v1h-1zM16 12h1v1h-1zM16 14h1v1h-1zM0 16h1v1h-1zM2 16h1v1h-1zM4 16h1v1h-1zM6 16h1v1h-1zM8 16h1v1h-1zM0 18h1v1h-1zM2 18h1v1h-1zM4 18h1v1h-1zM6 18h1v1h-1zM8 18h1v1h-1zM10 18h1v1h-1z"/><path fill="#7f997a" d="M20 0h1v1h-1zM22 0h1v1h-1zM23 1h1v1h-1zM20 2h1v1h-1zM22 2h1v1h-1zM21 3h1v1h-1zM23 3h1v1h-1zM20 4h1v1h-1zM22 4h1v1h-1zM19 5h1v1h-1zM23 5h1v1h-1zM20 6h1v1h-1zM22 6h1v1h-1zM21 7h1v1h-1zM23 7h1v1h-1zM20 8h1v1h-1zM22 8h1v1h-1zM20 10h1v1h-1zM22 10h1v1h-1zM21 11h1v1h-1zM18 12h1v1h-1zM20 12h1v1h-1zM22 12h1v1h-1zM19 13h1v1h-1zM18 14h1v1h-1zM20 14h1v1h-1zM22 14h1v1h-1zM17 15h1v1h-1zM19 15h1v1h-1zM21 15h1v1h-1zM18 16h1v1h-1zM20 16h1v1h-1zM19 17h1v1h-1zM21 17h1v1h-1zM18 18h1v1h-1zM20 18h1v1h-1zM1 19h1v1h-1zM5 19h1v1h-1zM9 19h1v1h-1zM19 19h1v1h-1zM0 20h1v1h-1zM2 20h1v1h-1zM4 20h1v1h-1zM6 20h1v1h-1zM8 20h1v1h-1zM10 20h1v1h-1zM12 20h1v1h-1zM3 21h1v1h-1zM7 21h1v1h-1zM9 21h1v1h-1zM11 21h1v1h-1zM0 22h1v1h-1zM2 22h1v1h-1zM4 22h1v1h-1zM6 22h1v1h-1zM8 22h1v1h-1zM10 22h1v1h-1zM12 22h1v1h-1zM1 23h1v1h-1zM3 23h1v1h-1zM5 23h1v1h-1zM7 23h1v1h-1z"/><path fill="#040404" d="M23 0h1v1h-1zM25 0h1v1h-1zM13 1h1v1h-1zM15 1h1v1h-1zM17 1h1v1h-1zM19 1h1v1h-1zM21 1h2v1h-2zM24 1h1v1h-1zM26 1h1v1h-1zM21 2h1v1h-1zM23 2h1v1h-1zM25 2h1v1h-1zM11 3h1v1h-1zM15 3h1v1h-1zM17 3h1v1h-1zM19 3h2v1h-2zM22 3h1v1h-1zM24 3h1v1h-1zM26 3h1v1h-1zM19 4h1v1h-1zM23 4h1v1h-1zM25 4h1v1h-1zM13 5h1v1h-1zM15 5h1v1h-1zM17 5h1v1h-1zM21 5h2v1h-2zM24 5h1v1h-1zM26 5h1v1h-1zM17 6h1v1h-1zM21 6h1v1h-1zM23 6h1v1h-1zM25 6h1v1h-1zM11 7h1v1h-1zM15 7h1v1h-1zM19 7h2v1h-2zM22 7h1v1h-1zM24 7h1v1h-1zM26 7h1v1h-1zM23 8h1v1h-1zM25 8h1v1h-1zM13 9h1v1h-1zM15 9h1v1h-1zM17 9h1v1h-1zM19 9h1v1h-1zM21 9h2v1h-2zM24 9h1v1h-1zM26 9h1v1h-1zM21 10h1v1h-1zM23 10h1v1h-1zM25 10h1v1h-1zM3 11h1v1h-1zM7 11h1v1h-1zM11 11h1v1h-1zM13 11h1v1h-1zM15 11h1v1h-1zM17 11h1v1h-1zM19 11h2v1h-2zM22 11h1v1h-1zM24 11h1v1h-1zM26 11h1v1h-1zM19 12h1v1h-1zM23 12h1v1h-1zM25 12h1v1h-1zM1 13h1v1h-1zM5 13h1v1h-1zM9 13h1v1h-1zM13 13h1v1h-1zM15 13h1v1h-1zM17 13h2v1h-2zM21 13h2v1h-2zM24 13h1v1h-1zM26 13h1v1h-1zM17 14h1v1h-1zM19 14h1v1h-1zM21 14h1v1h-1zM23 14h1v1h-1zM25 14h1v1h-1zM1 15h1v1h-1zM3 15h1v1h-1zM5 15h1v1h-1zM7 15h1v1h-1zM9 15h1v1h-1zM11 15h1v1h-1zM13 15h1v1h-1zM15 15h2v1h-2zM18 15h1v1h-1zM20 15h1v1h-1zM22 15h1v1h-1zM24 15h1v1h-1zM26 15h1v1h-1zM19 16h1v1h-1zM21 16h1v1h-1zM23 16h1v1h-1zM25 16h1v1h-1zM1 17h1v1h-1zM3 17h1v1h-1zM5 17h1v1h-1zM7 17h1v1h-1zM9 17h1v1h-1zM11 17h1v1h-1zM13 17h2v1h-2zM17 17h2v1h-2zM20 17h1v1h-1zM22 17h1v1h-1zM24 17h1v1h-1zM26 17h1v1h-1zM1 18h1v1h-1zM5 18h1v1h-1zM9 18h1v1h-1zM13 18h1v1h-1zM17 18h1v1h-1zM19 18h1v1h-1zM21 18h1v1h-1zM23 18h1v1h-1zM25 18h1v1h-1zM0 19h1v1h-1zM3 19h2v1h-2zM7 19h2v1h-2zM11 19h2v1h-2zM14 19h1v1h-1zM16 19h1v1h-1zM18 19h1v1h-1zM20 19h1v1h-1zM22 19h1v1h-1zM24 19h1v1h-1zM26 19h1v1h-1zM3 20h1v1h-1zM7 20h1v1h-1zM11 20h1v1h-1zM15 20h1v1h-1zM17 20h1v1h-1zM19 20h1v1h-1zM21 20h1v1h-1zM23 20h1v1h-1zM25 20h1v1h-1zM1 21h2v1h-2zM5 21h2v1h-2zM8 21h1v1h-1zM10 21h1v1h-1zM13 21h2v1h-2zM16 21h1v1h-1zM18 21h1v1h-1zM20 21h1v1h-1zM22 21h1v1h-1zM24 21h1v1h-1zM26 21h1v1h-1zM1 22h1v1h-1zM3 22h1v1h-1zM5 22h1v1h-1zM7 22h1v1h-1zM9 22h1v1h-1zM11 22h1v1h-1zM13 22h1v1h-1zM15 22h1v1h-1zM17 22h1v1h-1zM19 22h1v1h-1zM21 22h1v1h-1zM23 22h1v1h-1zM25 22h1v1h-1zM0 23h1v1h-1zM2 23h1v1h-1zM4 23h1v1h-1zM6 23h1v1h-1zM8 23h1v1h-1zM10 23h1v1h-1zM12 23h1v1h-1zM14 23h1v1h-1zM16 23h1v1h-1zM18 23h1v1h-1zM20 23h1v1h-1zM22 23h1v1h-1zM24 23h1v1h-1zM26 23h1v1h-1zM1 24h1v1h-1zM3 24h1v1h-1zM5 24h1v1h-1zM7 24h1v1h-1zM9 24h1v1h-1zM11 24h1v1h-1zM13 24h1v1h-1zM15 24h1v1h-1zM17 24h1v1h-1zM19 24h1v1h-1zM21 24h1v1h-1zM23 24h1v1h-1zM25 24h1v1h-1zM0 25h1v1h-1zM2 25h1v1h-1zM4 25h1v1h-1zM6 25h1v1h-1zM8 25h1v1h-1zM10 25h1v1h-1zM12 25h1v1h-1zM14 25h1v1h-1zM16 25h1v1h-1zM18 25h1v1h-1zM20 25h1v1h-1zM22 25h1v1h-1zM24 25h1v1h-1zM26 25h1v1h-1zM1 26h1v1h-1zM3 26h1v1h-1zM5 26h1v1h-1zM7 26h1v1h-1zM9 26h1v1h-1zM11 26h1v1h-1zM13 26h1v1h-1zM15 26h1v1h-1zM17 26h1v1h-1zM19 26h1v1h-1zM21 26h1v1h-1zM23 26h1v1h-1zM25 26h1v1h-1z"/><path fill="#748b6f" d="M24 0h1v1h-1zM26 0h1v1h-1zM25 1h1v1h-1zM24 2h1v1h-1zM26 2h1v1h-1zM25 3h1v1h-1zM24 4h1v1h-1zM26 4h1v1h-1zM25 5h1v1h-1zM24 6h1v1h-1zM26 6h1v1h-1zM25 7h1v1h-1zM24 8h1v1h-1zM26 8h1v1h-1zM23 9h1v1h-1zM25 9h1v1h-1zM24 10h1v1h-1zM26 10h1v1h-1zM23 11h1v1h-1zM25 11h1v1h-1zM24 12h1v1h-1zM26 12h1v1h-1zM23 13h1v1h-1zM25 13h1v1h-1zM24 14h1v1h-1zM26 14h1v1h-1zM23 15h1v1h-1zM25 15h1v1h-1zM22 16h1v1h-1zM24 16h1v1h-1zM26 16h1v1h-1zM23 17h1v1h-1zM25 17h1v1h-1zM22 18h1v1h-1zM24 18h1v1h-1zM26 18h1v1h-1zM21 19h1v1h-1zM23 19h1v1h-1zM25 19h1v1h-1zM20 20h1v1h-1zM22 20h1v1h-1zM24 20h1v1h-1zM26 20h1v1h-1zM21 21h1v1h-1zM23 21h1v1h-1zM25 21h1v1h-1zM22 22h1v1h-1zM24 22h1v1h-1zM26 22h1v1h-1zM9 23h1v1h-1zM11 23h1v1h-1zM13 23h1v1h-1zM21 23h1v1h-1zM23 23h1v1h-1zM25 23h1v1h-1zM0 24h1v1h-1zM2 24h1v1h-1zM4 24h1v1h-1zM6 24h1v1h-1zM8 24h1v1h-1zM10 24h1v1h-1zM12 24h1v1h-1zM14 24h1v1h-1zM22 24h1v1h-1zM24 24h1v1h-1zM26 24h1v1h-1zM1 25h1v1h-1zM3 25h1v1h-1zM5 25h1v1h-1zM7 25h1v1h-1zM9 25h1v1h-1zM11 25h1v1h-1zM13 25h1v1h-1zM15 25h1v1h-1zM23 25h1v1h-1zM25 25h1v1h-1zM0 26h1v1h-1zM2 26h1v1h-1zM4 26h1v1h-1zM6 26h1v1h-1zM8 26h1v1h-1zM10 26h1v1h-1zM12 26h1v1h-1zM14 26h1v1h-1zM24 26h1v1h-1zM26 26h1v1h-1z"/><path fill="#3c1a10" d="M3 4h1v1h-1zM5 4h1v1h-1zM7 4h1v1h-1zM9 4h1v1h-1zM4 5h7v1h-7zM5 6h1v1h-1zM7 6h1v1h-1zM9 6h1v1h-1zM5 7h6v1h-6zM5 8h1v1h-1zM7 8h1v1h-1zM9 8h1v1h-1zM11 8h1v1h-1zM6 9h7v1h-7zM7 10h1v1h-1zM9 10h1v1h-1zM11 10h1v1h-1zM13 10h1v1h-1zM8 11h3v1h-3zM12 11h1v1h-1zM9 12h1v1h-1zM11 12h1v1h-1zM13 12h1v1h-1zM8 13h1v1h-1zM10 13h3v1h-3zM14 13h1v1h-1zM9 14h1v1h-1zM11 14h1v1h-1zM13 14h1v1h-1zM15 14h1v1h-1zM10 15h1v1h-1zM12 15h1v1h-1zM14 15h1v1h-1zM11 16h1v1h-1zM13 16h1v1h-1zM15 16h1v1h-1zM12 17h1v1h-1zM16 17h1v1h-1zM11 18h1v1h-1zM15 18h1v1h-1zM13 20h1v1h-1z"/><path fill="#dcb4b4" d="M4 4h1v1h-1z"/><path fill="#cea8a8" d="M6 4h1v1h-1zM8 4h1v1h-1zM4 6h1v1h-1zM6 6h1v1h-1zM8 6h1v1h-1zM6 8h1v1h-1zM8 8h1v1h-1z"/><path fill="#bf9c9c" d="M10 6h1v1h-1zM10 8h1v1h-1zM8 10h1v1h-1zM10 10h1v1h-1zM12 10h1v1h-1zM8 12h1v1h-1zM10 12h1v1h-1zM12 12h1v1h-1z"/><path fill="#b19090" d="M14 12h1v1h-1zM10 14h1v1h-1zM12 14h1v1h-1zM14 14h1v1h-1zM10 16h1v1h-1zM12 16h1v1h-1zM14 16h1v1h-1z"/><path fill="#a28484" d="M16 16h1v1h-1zM15 17h1v1h-1zM12 18h1v1h-1zM14 18h1v1h-1zM16 18h1v1h-1zM13 19h1v1h-1zM15 19h1v1h-1zM17 19h1v1h-1zM14 20h1v1h-1zM16 20h1v1h-1zM18 20h1v1h-1zM15 21h1v1h-1zM17 21h1v1h-1zM14 22h1v1h-1z"/><path fill="#947979" d="M19 21h1v1h-1zM16 22h1v1h-1zM18 22h1v1h-1zM20 22h1v1h-1zM15 23h1v1h-1zM17 23h1v1h-1zM19 23h1v1h-1zM16 24h1v1h-1zM18 24h1v1h-1zM20 24h1v1h-1zM17 25h1v1h-1zM19 25h1v1h-1zM21 25h1v1h-1zM16 26h1v1h-1zM18 26h1v1h-1zM20 26h1v1h-1zM22 26h1v1h-1z"/></svg><div class="abs" style="left:226px;top:173px;width:62px;height:62px;background:#333331;border:4px solid #9c9c98;outline:1px solid #050505"></div><div class="abs" style="left:312px;top:173px;width:62px;height:62px;background:#333331;border:4px solid #9c9c98;outline:1px solid #050505"></div><div class="abs" style="left:398px;top:173px;width:62px;height:62px;background:#333331;border:4px solid #9c9c98;outline:1px solid #050505"></div><div class="abs" style="left:484px;top:173px;width:62px;height:62px;background:#333331;border:4px solid #9c9c98;outline:1px solid #050505"></div><div class="abs" style="left:91px;top:275px;width:2px;height:3px;background:#2cc;opacity:.8"></div><div class="abs" style="left:126px;top:275px;width:4px;height:3px;background:#2cc;opacity:.7"></div><svg style="position:absolute;left:22px;top:323px;outline:1px solid #050505" width="32" height="32" viewBox="0 0 31 31"><rect width="31" height="31" fill="#fff"/><rect x="1" y="1" width="29" height="29" fill="#e9e9e7"/><path d="M6 5h4v1h-4zM5 6h1v1h-1zM10 6h2v1h-2zM12 7h2v1h-2zM21 5h4v1h-4zM25 6h1v1h-1zM19 6h2v1h-2zM17 7h2v1h-2zM7 9h4v1h-4zM6 10h6v1h-6zM7 11h4v1h-4zM20 9h4v1h-4zM19 10h6v1h-6zM20 11h4v1h-4zM14 11h1v7h-1zM13 18h1v1h-1zM13 19h2v1h-2zM16 19h2v1h-2zM3 20h2v1h-2zM4 21h2v1h-2zM5 22h9v1h-9zM6 23h7v1h-7zM13 21h2v1h-2zM26 20h2v1h-2zM25 21h2v1h-2zM17 22h9v1h-9zM18 23h7v1h-7zM16 21h2v1h-2zM14 24h3v1h-3zM15 26h1v1h-1zM14 27h3v2h-3z" fill="#050505" stroke="#050505" stroke-width=".45"/></svg><div class="t" style="left:70.00px;top:312.92px;font-size:20.4px;line-height:20.4px;letter-spacing:0.031px;color:#f2f2f2;-webkit-text-stroke:.25px currentColor;transform:scaleX(1.06);transform-origin:0 0;">We shouldn’t peak in… it is not professional. I’m</div><div class="t" style="left:69.60px;top:344.92px;font-size:20.4px;line-height:20.4px;letter-spacing:0.181px;color:#f2f2f2;-webkit-text-stroke:.25px currentColor;transform:scaleX(1.06);transform-origin:0 0;">offended you even suggested that</div><svg style="position:absolute;left:22px;top:397px;outline:1px solid #050505" width="32" height="32" viewBox="0 0 31 31"><rect width="31" height="31" fill="#fff"/><rect x="1" y="1" width="29" height="29" fill="#e9e9e7"/><path d="M6 5h4v1h-4zM5 6h1v1h-1zM10 6h2v1h-2zM12 7h2v1h-2zM21 5h4v1h-4zM25 6h1v1h-1zM19 6h2v1h-2zM17 7h2v1h-2zM7 9h4v1h-4zM6 10h6v1h-6zM7 11h4v1h-4zM20 9h4v1h-4zM19 10h6v1h-6zM20 11h4v1h-4zM14 11h1v7h-1zM13 18h1v1h-1zM13 19h2v1h-2zM16 19h2v1h-2zM3 20h2v1h-2zM4 21h2v1h-2zM5 22h9v1h-9zM6 23h7v1h-7zM13 21h2v1h-2zM26 20h2v1h-2zM25 21h2v1h-2zM17 22h9v1h-9zM18 23h7v1h-7zM16 21h2v1h-2zM14 24h3v1h-3zM15 26h1v1h-1zM14 27h3v2h-3z" fill="#050505" stroke="#050505" stroke-width=".45"/></svg><div class="t" style="left:69.80px;top:402.92px;font-size:20.4px;line-height:20.4px;letter-spacing:0.000px;color:#f2f2f2;-webkit-text-stroke:.25px currentColor;transform:scaleX(0.9773332109754979);transform-origin:0 0;">SAID NO-ONE EVER</div><svg style="position:absolute;left:22px;top:455px;outline:1px solid #050505" width="32" height="32" viewBox="0 0 31 31"><rect width="31" height="31" fill="#fff"/><rect x="1" y="1" width="29" height="29" fill="#e9e9e7"/><path d="M6 5h4v1h-4zM5 6h1v1h-1zM10 6h2v1h-2zM12 7h2v1h-2zM21 5h4v1h-4zM25 6h1v1h-1zM19 6h2v1h-2zM17 7h2v1h-2zM7 9h4v1h-4zM6 10h6v1h-6zM7 11h4v1h-4zM20 9h4v1h-4zM19 10h6v1h-6zM20 11h4v1h-4zM14 11h1v7h-1zM13 18h1v1h-1zM13 19h2v1h-2zM16 19h2v1h-2zM3 20h2v1h-2zM4 21h2v1h-2zM5 22h9v1h-9zM6 23h7v1h-7zM13 21h2v1h-2zM26 20h2v1h-2zM25 21h2v1h-2zM17 22h9v1h-9zM18 23h7v1h-7zM16 21h2v1h-2zM14 24h3v1h-3zM15 26h1v1h-1zM14 27h3v2h-3z" fill="#050505" stroke="#050505" stroke-width=".45"/></svg><div class="t" style="left:70.00px;top:460.92px;font-size:20.4px;line-height:20.4px;letter-spacing:0.010px;color:#f2f2f2;-webkit-text-stroke:.25px currentColor;transform:scaleX(1.06);transform-origin:0 0;">The pass is <span style="color:#f4ee36">U!7Uaoolp7!00</span>, give it a go yourself</div><svg style="position:absolute;left:22px;top:513px;outline:1px solid #050505" width="32" height="32" viewBox="0 0 31 31"><rect width="31" height="31" fill="#fff"/><rect x="1" y="1" width="29" height="29" fill="#e9e9e7"/><path d="M6 5h4v1h-4zM5 6h1v1h-1zM10 6h2v1h-2zM12 7h2v1h-2zM21 5h4v1h-4zM25 6h1v1h-1zM19 6h2v1h-2zM17 7h2v1h-2zM7 9h4v1h-4zM6 10h6v1h-6zM7 11h4v1h-4zM20 9h4v1h-4zM19 10h6v1h-6zM20 11h4v1h-4zM14 11h1v7h-1zM13 18h1v1h-1zM13 19h2v1h-2zM16 19h2v1h-2zM3 20h2v1h-2zM4 21h2v1h-2zM5 22h9v1h-9zM6 23h7v1h-7zM13 21h2v1h-2zM26 20h2v1h-2zM25 21h2v1h-2zM17 22h9v1h-9zM18 23h7v1h-7zM16 21h2v1h-2zM14 24h3v1h-3zM15 26h1v1h-1zM14 27h3v2h-3z" fill="#050505" stroke="#050505" stroke-width=".45"/></svg><div class="t" style="left:70.00px;top:518.92px;font-size:20.4px;line-height:20.4px;letter-spacing:0.162px;color:#f2f2f2;-webkit-text-stroke:.25px currentColor;transform:scaleX(1.06);transform-origin:0 0;">This is not what I expected</div><div class="t" style="left:46.40px;top:576.92px;font-size:20.4px;line-height:20.4px;letter-spacing:0.266px;color:#2fd3e2;-webkit-text-stroke:.25px currentColor;transform:scaleX(1.06);transform-origin:0 0;">A company doing “transportation methods” you</div><div class="t" style="left:45.40px;top:608.92px;font-size:20.4px;line-height:20.4px;letter-spacing:0.000px;color:#2fd3e2;-webkit-text-stroke:.25px currentColor;transform:scaleX(1.045510455104551);transform-origin:0 0;">said…M4d is changed you said…and somehow I</div><div class="t" style="left:45.40px;top:640.92px;font-size:20.4px;line-height:20.4px;letter-spacing:0.085px;color:#2fd3e2;-webkit-text-stroke:.25px currentColor;transform:scaleX(1.06);transform-origin:0 0;">have on my PC weird docs from Doimetsu Corp.</div><svg style="position:absolute;left:548px;top:603px;outline:1px solid #050505" width="32" height="32" viewBox="0 0 32 32"><defs><linearGradient id="mg" x1="0" y1="0" x2="0" y2="1"><stop offset="0" stop-color="#06065e"/><stop offset=".5" stop-color="#0a0a8c"/><stop offset="1" stop-color="#1212b4"/></linearGradient></defs><rect width="32" height="32" fill="#fff"/><rect x="2" y="2" width="28" height="28" fill="url(#mg)"/><circle cx="16.8" cy="8.8" r="5.6" fill="#f4f4f4"/><circle cx="16" cy="8" r="2" fill="#e4e4d8"/><path d="M13 17.5h8l-1.5 1.5h-5z" fill="#c8c8ff"/><rect x="15" y="19.2" width="4" height="1" fill="#a0a0f0"/><g fill="#fff"><rect x="3.5" y="4" width="1.2" height="1.2"/><rect x="8.5" y="4" width="2" height="1.2"/><rect x="5.2" y="7" width="1.2" height="2"/><rect x="23.5" y="3" width="2" height="1.2"/><rect x="28" y="4" width="1.2" height="1.2"/><rect x="28" y="8" width="1.2" height="2"/><rect x="25" y="10" width="1.2" height="2"/></g></svg><svg style="position:absolute;left:22px;top:725px;outline:1px solid #050505" width="32" height="32" viewBox="0 0 31 31"><rect width="31" height="31" fill="#fff"/><rect x="1" y="1" width="29" height="29" fill="#e9e9e7"/><path d="M6 5h4v1h-4zM5 6h1v1h-1zM10 6h2v1h-2zM12 7h2v1h-2zM21 5h4v1h-4zM25 6h1v1h-1zM19 6h2v1h-2zM17 7h2v1h-2zM7 9h4v1h-4zM6 10h6v1h-6zM7 11h4v1h-4zM20 9h4v1h-4zM19 10h6v1h-6zM20 11h4v1h-4zM14 11h1v7h-1zM13 18h1v1h-1zM13 19h2v1h-2zM16 19h2v1h-2zM3 20h2v1h-2zM4 21h2v1h-2zM5 22h9v1h-9zM6 23h7v1h-7zM13 21h2v1h-2zM26 20h2v1h-2zM25 21h2v1h-2zM17 22h9v1h-9zM18 23h7v1h-7zM16 21h2v1h-2zM14 24h3v1h-3zM15 26h1v1h-1zM14 27h3v2h-3z" fill="#050505" stroke="#050505" stroke-width=".45"/></svg><div class="t" style="left:68.80px;top:698.92px;font-size:20.4px;line-height:20.4px;letter-spacing:0.133px;color:#f2f2f2;-webkit-text-stroke:.25px currentColor;transform:scaleX(1.06);transform-origin:0 0;">I think he may have got some details wrong; there</div><div class="t" style="left:69.20px;top:730.92px;font-size:20.4px;line-height:20.4px;letter-spacing:0.195px;color:#f2f2f2;-webkit-text-stroke:.25px currentColor;transform:scaleX(1.06);transform-origin:0 0;">must be an explanation. Let’s not make it into a big</div><div class="t" style="left:69.60px;top:762.92px;font-size:20.4px;line-height:20.4px;letter-spacing:0.167px;color:#f2f2f2;-webkit-text-stroke:.25px currentColor;transform:scaleX(1.06);transform-origin:0 0;">deal</div><svg class="px" style="position:absolute;left:806px;top:76px;outline:1px solid #050505" width="68" height="68" viewBox="0 0 68 68"><path d="M4 0H64V2H66V4H68V64H66V66H64V68H4V66H2V64H0V4H2V2H4z" fill="#9c9c9c"/><path d="M6 4H62V6H64V62H62V64H6V62H4V6H6z" fill="#0b0b0b"/><path fill-rule="evenodd" fill="#b4b4b4" d="M20 22h28v26h-28z M22 24v22h24v-22zM26 12h2v10h-2zM30 12h2v10h-2zM10 30h10v2h-10zM48 30h10v2h-10zM10 34h10v2h-10zM48 34h10v2h-10zM10 38h10v2h-10zM48 38h10v2h-10zM22 48h2v6h-2zM26 48h2v6h-2zM30 48h2v6h-2zM34 48h2v6h-2zM38 48h2v6h-2zM42 48h2v6h-2zM24 26h4v2h-4zM40 26h4v2h-4zM24 30h4v2h-4zM40 30h4v2h-4zM24 34h4v2h-4zM40 34h4v2h-4zM24 38h4v2h-4zM40 38h4v2h-4zM24 42h2v2h-2zM42 42h2v2h-2zM30 26h2v4h-2zM30 40h2v4h-2zM36 26h2v4h-2zM36 40h2v4h-2z"/></svg><svg class="px" style="position:absolute;left:926px;top:76px;outline:1px solid #050505" width="68" height="68" viewBox="0 0 68 68"><path d="M4 0H64V2H66V4H68V64H66V66H64V68H4V66H2V64H0V4H2V2H4z" fill="#9c9c9c"/><path d="M6 4H62V6H64V62H62V64H6V62H4V6H6z" fill="#0b0b0b"/><path fill="#b4b4b4" d="M30 10h2v2h-2zM32 10h2v2h-2zM34 10h2v2h-2zM36 10h2v2h-2zM36 10h2v2h-2zM38 12h2v2h-2zM40 14h2v2h-2zM40 14h2v2h-2zM40 16h2v2h-2zM40 18h2v2h-2zM40 20h2v2h-2zM40 22h2v2h-2zM40 22h2v2h-2zM38 24h2v2h-2zM36 26h2v2h-2zM34 28h2v2h-2zM32 30h2v2h-2zM30 32h2v2h-2zM28 34h2v2h-2zM26 36h2v2h-2zM24 38h2v2h-2zM22 40h2v2h-2zM22 40h2v2h-2zM20 40h2v2h-2zM18 40h2v2h-2zM16 40h2v2h-2zM16 40h2v2h-2zM14 38h2v2h-2zM12 36h2v2h-2zM10 34h2v2h-2zM10 34h2v2h-2zM10 32h2v2h-2zM10 30h2v2h-2zM10 30h2v2h-2zM12 28h2v2h-2zM14 26h2v2h-2zM16 24h2v2h-2zM18 22h2v2h-2zM20 20h2v2h-2zM22 18h2v2h-2zM24 16h2v2h-2zM26 14h2v2h-2zM28 12h2v2h-2zM30 10h2v2h-2zM14 26h2v2h-2zM16 26h2v2h-2zM18 26h2v2h-2zM20 26h2v2h-2zM22 26h2v2h-2zM24 26h2v2h-2zM26 26h2v2h-2zM28 26h2v2h-2zM30 26h2v2h-2zM32 26h2v2h-2zM34 26h2v2h-2zM24 18h2v2h-2zM24 20h2v2h-2zM24 22h2v2h-2zM24 24h2v2h-2zM24 26h2v2h-2zM24 28h2v2h-2zM24 30h2v2h-2zM24 32h2v2h-2zM24 34h2v2h-2zM16 22h2v2h-2zM18 20h2v2h-2zM20 18h2v2h-2zM22 16h2v2h-2zM28 34h2v2h-2zM30 32h2v2h-2zM32 30h2v2h-2zM34 28h2v2h-2zM30 30h2v2h-2zM32 32h2v2h-2zM34 34h2v2h-2zM36 36h2v2h-2zM38 38h2v2h-2zM40 40h2v2h-2zM42 42h2v2h-2zM44 44h2v2h-2zM46 46h2v2h-2zM48 48h2v2h-2zM50 50h2v2h-2zM52 52h2v2h-2zM54 54h2v2h-2zM56 56h2v2h-2zM58 58h2v2h-2zM60 60h2v2h-2zM34 30h2v2h-2zM36 32h2v2h-2zM38 34h2v2h-2zM40 36h2v2h-2zM42 38h2v2h-2zM44 40h2v2h-2zM46 42h2v2h-2zM48 44h2v2h-2zM50 46h2v2h-2zM52 48h2v2h-2zM54 50h2v2h-2zM56 52h2v2h-2zM58 54h2v2h-2zM60 56h2v2h-2zM62 58h2v2h-2zM10 46h2v2h-2zM12 48h2v2h-2zM14 50h2v2h-2zM16 52h2v2h-2zM16 52h2v2h-2zM14 54h2v2h-2zM12 56h2v2h-2zM10 58h2v2h-2zM20 58h10v2h-10z"/></svg><svg class="px" style="position:absolute;left:1046px;top:76px;outline:1px solid #050505" width="68" height="68" viewBox="0 0 68 68"><path d="M4 0H64V2H66V4H68V64H66V66H64V68H4V66H2V64H0V4H2V2H4z" fill="#a4a4a4"/><path d="M6 4H62V6H64V62H62V64H6V62H4V6H6z" fill="#0b0b0b"/><path fill-rule="evenodd" fill="#b4b4b4" d="M12 12h44v24h-44z M14 14v20h40v-20zM14 36h2v4h-2zM52 36h2v4h-2zM12 40h2v4h-2zM54 40h2v4h-2zM10 44h2v4h-2zM56 44h2v4h-2zM8 48h2v4h-2zM58 48h2v4h-2zM8 52h52v2h-52zM18 38h2v2h-2zM22 38h4v2h-4zM28 38h4v2h-4zM34 38h4v2h-4zM40 38h4v2h-4zM46 38h4v2h-4zM16 42h4v2h-4zM22 42h4v2h-4zM28 42h4v2h-4zM34 42h4v2h-4zM40 42h4v2h-4zM46 42h4v2h-4zM14 46h4v2h-4zM20 46h4v2h-4zM26 46h16v2h-16zM44 46h4v2h-4zM50 46h4v2h-4z"/></svg><div class="abs" style="left:1050px;top:148px;width:60px;height:4px;background:#1cc4f0"></div><div class="mono" style="left:645.30px;top:203.66px;font-size:25.000px;line-height:25.000px;color:#f4f4f4;transform:scaleY(1.1351);">/Downloads</div><svg class="px" style="position:absolute;left:660px;top:270px;outline:1px solid #050505" width="40" height="52" viewBox="0 0 40 52"><rect width="40" height="52" fill="#fff"/><rect x="4" y="4" width="32" height="44" fill="#000"/><path fill="#fff" d="M8 18h2v2h-2zM10 18h2v2h-2zM12 18h2v2h-2zM16 18h2v2h-2zM22 18h2v2h-2zM26 18h2v2h-2zM28 18h2v2h-2zM30 18h2v2h-2zM10 20h2v2h-2zM18 20h2v2h-2zM20 20h2v2h-2zM28 20h2v2h-2zM10 22h2v2h-2zM18 22h2v2h-2zM20 22h2v2h-2zM28 22h2v2h-2zM10 24h2v2h-2zM16 24h2v2h-2zM22 24h2v2h-2zM28 24h2v2h-2z"/></svg><div class="t" style="left:641.20px;top:333.93px;font-size:14.6px;line-height:14.6px;letter-spacing:0.274px;color:#f2f2f2;-webkit-text-stroke:.2px currentColor;transform:scaleX(1.05);transform-origin:0 0;">ReportS1.txt</div><svg class="px" style="position:absolute;left:770px;top:270px;outline:1px solid #050505" width="40" height="52" viewBox="0 0 40 52"><rect width="40" height="52" fill="#fff"/><rect x="4" y="4" width="32" height="44" fill="#000"/><path fill="#fff" d="M8 18h2v2h-2zM10 18h2v2h-2zM12 18h2v2h-2zM16 18h2v2h-2zM22 18h2v2h-2zM26 18h2v2h-2zM28 18h2v2h-2zM30 18h2v2h-2zM10 20h2v2h-2zM18 20h2v2h-2zM20 20h2v2h-2zM28 20h2v2h-2zM10 22h2v2h-2zM18 22h2v2h-2zM20 22h2v2h-2zM28 22h2v2h-2zM10 24h2v2h-2zM16 24h2v2h-2zM22 24h2v2h-2zM28 24h2v2h-2z"/></svg><div class="t" style="left:751.20px;top:333.93px;font-size:14.6px;line-height:14.6px;letter-spacing:0.274px;color:#f2f2f2;-webkit-text-stroke:.2px currentColor;transform:scaleX(1.05);transform-origin:0 0;">ReportS2.txt</div><svg class="px" style="position:absolute;left:870px;top:270px;outline:1px solid #050505" width="40" height="52" viewBox="0 0 40 52"><rect width="40" height="52" fill="#fff"/><rect x="4" y="4" width="32" height="44" fill="#000"/><path fill="#fff" d="M8 18h2v2h-2zM10 18h2v2h-2zM12 18h2v2h-2zM16 18h2v2h-2zM22 18h2v2h-2zM26 18h2v2h-2zM28 18h2v2h-2zM30 18h2v2h-2zM10 20h2v2h-2zM18 20h2v2h-2zM20 20h2v2h-2zM28 20h2v2h-2zM10 22h2v2h-2zM18 22h2v2h-2zM20 22h2v2h-2zM28 22h2v2h-2zM10 24h2v2h-2zM16 24h2v2h-2zM22 24h2v2h-2zM28 24h2v2h-2z"/></svg><div class="t" style="left:851.20px;top:333.93px;font-size:14.6px;line-height:14.6px;letter-spacing:0.274px;color:#f2f2f2;-webkit-text-stroke:.2px currentColor;transform:scaleX(1.05);transform-origin:0 0;">ReportS3.txt</div><svg class="px" style="position:absolute;left:970px;top:270px;outline:1px solid #050505" width="40" height="52" viewBox="0 0 40 52"><rect width="40" height="52" fill="#fff"/><rect x="4" y="4" width="32" height="44" fill="#000"/><path fill="#fff" d="M8 18h2v2h-2zM10 18h2v2h-2zM12 18h2v2h-2zM16 18h2v2h-2zM22 18h2v2h-2zM26 18h2v2h-2zM28 18h2v2h-2zM30 18h2v2h-2zM10 20h2v2h-2zM18 20h2v2h-2zM20 20h2v2h-2zM28 20h2v2h-2zM10 22h2v2h-2zM18 22h2v2h-2zM20 22h2v2h-2zM28 22h2v2h-2zM10 24h2v2h-2zM16 24h2v2h-2zM22 24h2v2h-2zM28 24h2v2h-2z"/></svg><div class="t" style="left:955.90px;top:333.93px;font-size:14.6px;line-height:14.6px;letter-spacing:0.274px;color:#f2f2f2;-webkit-text-stroke:.2px currentColor;transform:scaleX(1.05);transform-origin:0 0;">ReportS4.txt</div><svg class="px" style="position:absolute;left:1080px;top:270px;outline:1px solid #050505" width="40" height="52" viewBox="0 0 40 52"><defs><pattern id="ck" width="4" height="4" patternUnits="userSpaceOnUse"><rect width="4" height="4" fill="#04181e"/><rect width="2" height="2" fill="#1cc4f0"/><rect x="2" y="2" width="2" height="2" fill="#1cc4f0"/></pattern></defs><rect width="40" height="52" fill="#1cc4f0"/><rect x="4" y="4" width="32" height="44" fill="url(#ck)"/><path fill="#a8ecff" d="M8 18h2v2h-2zM10 18h2v2h-2zM12 18h2v2h-2zM16 18h2v2h-2zM22 18h2v2h-2zM26 18h2v2h-2zM28 18h2v2h-2zM30 18h2v2h-2zM10 20h2v2h-2zM18 20h2v2h-2zM20 20h2v2h-2zM28 20h2v2h-2zM10 22h2v2h-2zM18 22h2v2h-2zM20 22h2v2h-2zM28 22h2v2h-2zM10 24h2v2h-2zM16 24h2v2h-2zM22 24h2v2h-2zM28 24h2v2h-2z"/></svg><div class="t" style="left:1060.90px;top:333.93px;font-size:14.6px;line-height:14.6px;letter-spacing:0.300px;color:#f2f2f2;-webkit-text-stroke:.2px currentColor;transform:scaleX(1.05);transform-origin:0 0;">ReportS5.txt</div><svg class="px" style="position:absolute;left:1190px;top:270px;outline:1px solid #050505" width="40" height="52" viewBox="0 0 40 52"><rect width="40" height="52" fill="#fff"/><rect x="4" y="4" width="32" height="44" fill="#000"/><path fill="#fff" d="M8 18h2v2h-2zM10 18h2v2h-2zM12 18h2v2h-2zM16 18h2v2h-2zM22 18h2v2h-2zM26 18h2v2h-2zM28 18h2v2h-2zM30 18h2v2h-2zM10 20h2v2h-2zM18 20h2v2h-2zM20 20h2v2h-2zM28 20h2v2h-2zM10 22h2v2h-2zM18 22h2v2h-2zM20 22h2v2h-2zM28 22h2v2h-2zM10 24h2v2h-2zM16 24h2v2h-2zM22 24h2v2h-2zM28 24h2v2h-2z"/></svg><div class="t" style="left:1171.00px;top:333.93px;font-size:14.6px;line-height:14.6px;letter-spacing:0.291px;color:#f2f2f2;-webkit-text-stroke:.2px currentColor;transform:scaleX(1.05);transform-origin:0 0;">ReportS6.txt</div><div class="mono" style="left:639.20px;top:476.07px;font-size:16.667px;line-height:16.667px;color:#f4f4f4;transform:scaleY(1.1381);">Text File   Size: 760kb   Created: 21 days ago</div><div class="abs" style="left:743px;top:478px;width:2px;height:12.6px;background:#f4f4f4"></div><div class="abs" style="left:883px;top:478px;width:2px;height:12.6px;background:#f4f4f4"></div><div class="abs" style="left:1350px;top:67px;width:34px;height:34px;background:#0b0b0b;border:4px solid #9c9c9c;outline:1px solid #050505"></div><svg class="px" style="position:absolute;left:1350px;top:67px" width="34" height="34" viewBox="0 0 34 34"><path fill="#cfcfcf" d="M8 16h18v2h-18z M10 14h2v2h-2z M12 12h2v2h-2z M14 10h2v2h-2z M10 18h2v2h-2z M12 20h2v2h-2z M14 22h2v2h-2z"/></svg><div class="abs" style="left:1403px;top:67px;width:432px;height:34px;background:#101010;border:2px solid #fff;outline:1px solid #050505"></div><div class="abs" style="left:1856px;top:67px;width:34px;height:34px;background:#000;border:4px solid #fff;outline:1px solid #050505"></div><svg class="px" style="position:absolute;left:1856px;top:67px" width="34" height="34" viewBox="0 0 34 34"><path fill="#fff" d="M16 8h2v2h-2z M14 10h2v2h-2z M18 10h2v2h-2z M12 12h2v2h-2z M20 12h2v2h-2z M10 14h2v2h-2z M22 14h2v2h-2z M8 16h2v2h-2z M24 16h2v2h-2z M6 18h2v2h-2z M26 18h2v2h-2z M10 14h2v12h-2z M22 14h2v12h-2z M10 24h14v2h-14z"/></svg><svg class="px" style="position:absolute;left:1400px;top:175px" width="140" height="150" viewBox="0 0 140 150"><circle cx="70.8" cy="22.2" r="6.2" fill="none" stroke="#d3ab2d" stroke-width="2.8"/><rect x="68.8" y="20.2" width="4" height="4" fill="none" stroke="#d3ab2d" stroke-width="1.5"/><line x1="65.3" y1="28.5" x2="29.9" y2="106.9" stroke="#d3ab2d" stroke-width="3"/><line x1="76.4" y1="28.5" x2="111.8" y2="109.7" stroke="#d3ab2d" stroke-width="3"/><line x1="65.3" y1="29.9" x2="41.7" y2="54.9" stroke="#d3ab2d" stroke-width="3"/><rect x="38.2" y="51.4" width="4.4" height="11.4" fill="#d3ab2d"/><line x1="42.4" y1="59.7" x2="50.7" y2="61.1" stroke="#d3ab2d" stroke-width="3"/><line x1="39.6" y1="86.4" x2="100.7" y2="86.4" stroke="#d3ab2d" stroke-width="3"/><line x1="71.5" y1="87.5" x2="71.5" y2="125.7" stroke="#d3ab2d" stroke-width="3.6"/><line x1="70.1" y1="28.5" x2="91.0" y2="125.0" stroke="#d3ab2d" stroke-width="5" stroke-dasharray="2.4 1.6"/><line x1="72.9" y1="28.5" x2="83.3" y2="77.8" stroke="#d3ab2d" stroke-width="1.5"/><rect x="66.4" y="53.5" width="31.9" height="5.8" fill="#d3ab2d"/><rect x="97.2" y="48.9" width="14.7" height="13.9" fill="#d3ab2d"/><line x1="88.9" y1="59.7" x2="111.1" y2="108.3" stroke="#d3ab2d" stroke-width="3"/><path d="M16.7 107.6 Q70.8 162.8 123.6 111.1" fill="none" stroke="#d3ab2d" stroke-width="2.8"/><path d="M29.9 106.2 Q70.8 140.8 111.8 109.7" fill="none" stroke="#d3ab2d" stroke-width="2.8"/><path d="M23.3 109.9 Q70.8 151.8 117.7 113.4" fill="none" stroke="#d3ab2d" stroke-width="5" stroke-dasharray="2 3.4" opacity=".9"/><line x1="16.7" y1="107.6" x2="25.7" y2="101.4" stroke="#d3ab2d" stroke-width="3"/><line x1="25.7" y1="101.4" x2="29.9" y2="106.2" stroke="#d3ab2d" stroke-width="3"/><line x1="123.6" y1="111.1" x2="116.0" y2="105.6" stroke="#d3ab2d" stroke-width="3"/><line x1="116.0" y1="105.6" x2="111.8" y2="109.7" stroke="#d3ab2d" stroke-width="3"/><circle cx="91.7" cy="127.8" r="7.6" fill="#d3ab2d"/><circle cx="91.7" cy="127.8" r="3" fill="#1b1b1b"/></svg><div class="t" style="left:1535.40px;top:187.14px;font-size:62.4px;line-height:62.4px;letter-spacing:4.702px;color:#d3ab2d;font-family:'Liberation Serif',serif;-webkit-text-stroke:2.5px #d3ab2d;transform:scaleX(1.22);transform-origin:0 0;">Sextant</div><div class="t" style="left:1540.20px;top:259.41px;font-size:19px;line-height:19px;letter-spacing:0.322px;color:#e2e2e2;font-style:italic;">The best way to navigate the</div><div class="t" style="left:1538.80px;top:282.81px;font-size:19px;line-height:19px;letter-spacing:0.505px;color:#e2e2e2;font-style:italic;">Shadownet</div><div class="t" style="left:1395.00px;top:354.78px;font-size:16.2px;line-height:16.2px;letter-spacing:0.024px;color:#dedede;">BOOKMARKS</div><svg class="px" style="position:absolute;left:1397px;top:388px;outline:1px solid #0a0a0a" width="66" height="44" viewBox="0 0 66 44"><rect width="66" height="44" fill="#a4a49c"/><rect x="2" y="2" width="62" height="40" fill="#3a12ff"/><path fill="#fff" d="M4 24h4v12h-4zM8 36h6v4h-6zM14 24h4v16h-4zM18 36h2v4h-2zM18 24h4v12h-4zM24 24h4v16h-4zM34 24h4v16h-4zM38 24h10v4h-10zM44 28h4v4h-4zM38 32h8v2h-8zM42 34h4v2h-4zM44 36h4v4h-4zM52 24h4v16h-4zM56 24h6v4h-6zM56 30h4v4h-4zM56 36h6v4h-6zM36 4h2v2h-2zM34 6h2v4h-2zM32 10h2v4h-2zM30 14h2v4h-2zM28 18h2v4h-2z"/><rect x="28" y="32" width="6" height="2" fill="#14086a"/><rect x="48" y="31" width="4" height="2" fill="#14086a"/></svg><svg class="px" style="position:absolute;left:1517px;top:388px;outline:1px solid #0a0a0a" width="66" height="44" viewBox="0 0 66 44"><rect width="66" height="44" fill="#9a9a9a"/><rect x="2" y="2" width="62" height="20" fill="#000"/><rect x="2" y="22" width="62" height="20" fill="#c4f0f6"/><rect x="2" y="2" width="3" height="8" fill="#fff"/><rect x="60" y="2" width="4" height="10" fill="#2ad8e8"/><rect x="61" y="24" width="3" height="5" fill="#2ad8e8"/><rect x="20" y="3" width="26" height="15" fill="#6a1a8c"/><path fill="#fff" d="M24 6h7v2h-2.5v6h2.5v2h-7v-2h2.5v-6h-2.5z M34 6h8v2h-6v2h4v2h-4v4h-2z"/><rect x="12" y="11" width="2" height="2" fill="#fff"/><rect x="50" y="5" width="2" height="2" fill="#fff"/><rect x="54" y="12" width="2" height="2" fill="#fff"/><rect x="49" y="14" width="2" height="2" fill="#fff"/><rect x="19.5" y="3" width="1.5" height="3" fill="#fff"/><rect x="45" y="3" width="1.5" height="3" fill="#fff"/><rect x="20" y="18" width="1.5" height="5" fill="#ddd"/><rect x="44.5" y="18" width="1.5" height="5" fill="#ddd"/><rect x="4.0" y="22" width="2" height="5" fill="#000"/><rect x="10.2" y="22" width="2" height="3" fill="#000"/><rect x="16.4" y="22" width="2" height="5" fill="#000"/><rect x="22.6" y="22" width="2" height="3" fill="#000"/><rect x="28.8" y="22" width="2" height="5" fill="#000"/><rect x="35.0" y="22" width="2" height="3" fill="#000"/><rect x="41.2" y="22" width="2" height="5" fill="#000"/><rect x="47.4" y="22" width="2" height="3" fill="#000"/><rect x="53.6" y="22" width="2" height="5" fill="#000"/><rect x="59.8" y="22" width="2" height="3" fill="#000"/><rect x="4" y="30" width="56" height="2.5" fill="#e4f8fa"/><path d="M33 34l-7 8h14z" fill="#111"/><path d="M33 37l-4 5h8z" fill="#bbb"/></svg><div class="t" style="left:1396.00px;top:438.84px;font-size:12.7px;line-height:12.7px;letter-spacing:0.000px;color:#fff;font-weight:bold;transform:scaleX(0.8687664041994756);transform-origin:0 0;">SLASHWIRE</div><div class="t" style="left:1508.70px;top:438.84px;font-size:12.7px;line-height:12.7px;letter-spacing:0.000px;color:#fff;font-weight:bold;transform:scaleX(0.8513313373040805);transform-origin:0 0;">ICE FORTRESS</div><div class="abs" style="left:14px;top:1040px;width:104px;height:40px;background:#000"></div><svg class="px" style="position:absolute;left:16px;top:1040px" width="100" height="40" viewBox="0 0 50 20"><rect width="50" height="20" fill="#000"/><path fill="#ffffff" d="M0 0h50v1h-50zM0 1h1v1h-1zM49 1h1v1h-1zM0 2h1v1h-1zM6 2h4v1h-4zM20 2h11v1h-11zM41 2h4v1h-4zM49 2h1v1h-1zM0 3h1v1h-1zM7 3h6v1h-6zM17 3h3v1h-3zM31 3h3v1h-3zM38 3h6v1h-6zM49 3h1v1h-1zM0 4h1v1h-1zM8 4h9v1h-9zM20 4h11v1h-11zM34 4h9v1h-9zM49 4h1v1h-1zM0 5h1v1h-1zM9 5h14v1h-14zM24 5h3v1h-3zM28 5h14v1h-14zM49 5h1v1h-1zM0 6h1v1h-1zM10 6h3v1h-3zM15 6h21v1h-21zM38 6h3v1h-3zM49 6h1v1h-1zM0 7h1v1h-1zM10 7h1v1h-1zM16 7h8v1h-8zM25 7h1v1h-1zM27 7h8v1h-8zM40 7h1v1h-1zM49 7h1v1h-1zM0 8h1v1h-1zM9 8h1v1h-1zM16 8h4v1h-4zM21 8h4v1h-4zM26 8h4v1h-4zM31 8h4v1h-4zM41 8h1v1h-1zM49 8h1v1h-1zM0 9h1v1h-1zM8 9h1v1h-1zM19 9h2v1h-2zM22 9h7v1h-7zM30 9h2v1h-2zM42 9h1v1h-1zM49 9h1v1h-1zM0 10h1v1h-1zM7 10h1v1h-1zM20 10h2v1h-2zM23 10h5v1h-5zM29 10h2v1h-2zM43 10h1v1h-1zM49 10h1v1h-1zM0 11h1v1h-1zM7 11h1v1h-1zM12 11h1v1h-1zM21 11h4v1h-4zM26 11h4v1h-4zM38 11h1v1h-1zM43 11h1v1h-1zM49 11h1v1h-1zM0 12h1v1h-1zM7 12h1v1h-1zM12 12h1v1h-1zM21 12h4v1h-4zM26 12h4v1h-4zM38 12h1v1h-1zM43 12h1v1h-1zM49 12h1v1h-1zM0 13h1v1h-1zM6 13h1v1h-1zM12 13h1v1h-1zM21 13h2v1h-2zM24 13h3v1h-3zM28 13h2v1h-2zM38 13h1v1h-1zM44 13h1v1h-1zM49 13h1v1h-1zM0 14h1v1h-1zM6 14h1v1h-1zM12 14h1v1h-1zM21 14h1v1h-1zM23 14h1v1h-1zM25 14h1v1h-1zM27 14h1v1h-1zM29 14h1v1h-1zM38 14h1v1h-1zM44 14h1v1h-1zM49 14h1v1h-1zM0 15h1v1h-1zM6 15h1v1h-1zM13 15h1v1h-1zM20 15h1v1h-1zM25 15h1v1h-1zM30 15h1v1h-1zM37 15h1v1h-1zM44 15h1v1h-1zM49 15h1v1h-1zM0 16h1v1h-1zM6 16h1v1h-1zM13 16h2v1h-2zM19 16h2v1h-2zM30 16h2v1h-2zM36 16h2v1h-2zM44 16h1v1h-1zM49 16h1v1h-1zM0 17h1v1h-1zM6 17h1v1h-1zM15 17h4v1h-4zM32 17h4v1h-4zM44 17h1v1h-1zM49 17h1v1h-1zM0 18h1v1h-1zM6 18h1v1h-1zM44 18h1v1h-1zM49 18h1v1h-1zM0 19h50v1h-50z"/><path fill="#f6b80c" d="M15 9h4v1h-4zM32 9h4v1h-4zM14 10h6v1h-6zM31 10h6v1h-6zM13 11h3v1h-3zM18 11h3v1h-3zM30 11h3v1h-3zM35 11h3v1h-3zM13 12h2v1h-2zM19 12h2v1h-2zM30 12h2v1h-2zM36 12h2v1h-2zM13 13h2v1h-2zM19 13h2v1h-2zM30 13h2v1h-2zM36 13h2v1h-2zM13 14h3v1h-3zM18 14h3v1h-3zM30 14h3v1h-3zM35 14h3v1h-3zM14 15h6v1h-6zM31 15h6v1h-6zM15 16h4v1h-4zM32 16h4v1h-4z"/><path fill="#8c8c8c" d="M24 15h1v1h-1zM26 15h1v1h-1zM24 16h3v1h-3zM25 17h1v1h-1z"/></svg><div class="mono" style="left:806.50px;top:1052.89px;font-size:19.000px;line-height:19.000px;color:#f4f4f4;transform:scaleY(1.0383);">CPU:</div><div class="abs" style="left:852px;top:1066px;width:18px;height:2px;background:#22d41e"></div><div class="mono" style="left:874.90px;top:1052.89px;font-size:19.000px;line-height:19.000px;color:#f4f4f4;transform:scaleY(1.0383);">21% MEM:</div><div class="abs" style="left:967px;top:1062px;width:18px;height:2px;background:#f2d21c"></div><div class="abs" style="left:967px;top:1066px;width:18px;height:2px;background:#f2d21c"></div><div class="mono" style="left:989.00px;top:1052.89px;font-size:19.000px;line-height:19.000px;color:#f4f4f4;transform:scaleY(1.0383);">46% NNJ:10</div><div class="mono" style="left:1105.50px;top:1056.38px;font-size:15.083px;line-height:15.083px;color:#f4f4f4;transform:scaleY(1.0060);">tflops</div><svg class="px" style="position:absolute;left:1680px;top:1054px" width="20" height="13" viewBox="0 0 20 13"><path fill="#f4f4f4" d="M5 0h10v1.6h-10z M2.5 1.6h2.5v1.6h-2.5z M15 1.6h2.5v1.6h-2.5z M0.5 3.2h2v1.6h-2z M17.5 3.2h2v1.6h-2z M6.5 4.8h7v1.6h-7z M4.5 6.4h2v1.6h-2z M13.5 6.4h2v1.6h-2z M8.5 8.6h3v1.4h-3z M9 11h2v2h-2z"/></svg><div class="mono" style="left:1728.30px;top:1052.99px;font-size:18.833px;line-height:18.833px;color:#f4f4f4;transform:scaleY(0.9991);">4/6/2067</div><div class="mono" style="left:1842.00px;top:1052.99px;font-size:18.833px;line-height:18.833px;color:#f4f4f4;transform:scaleY(0.9991);">00:08</div></div></body></html>
